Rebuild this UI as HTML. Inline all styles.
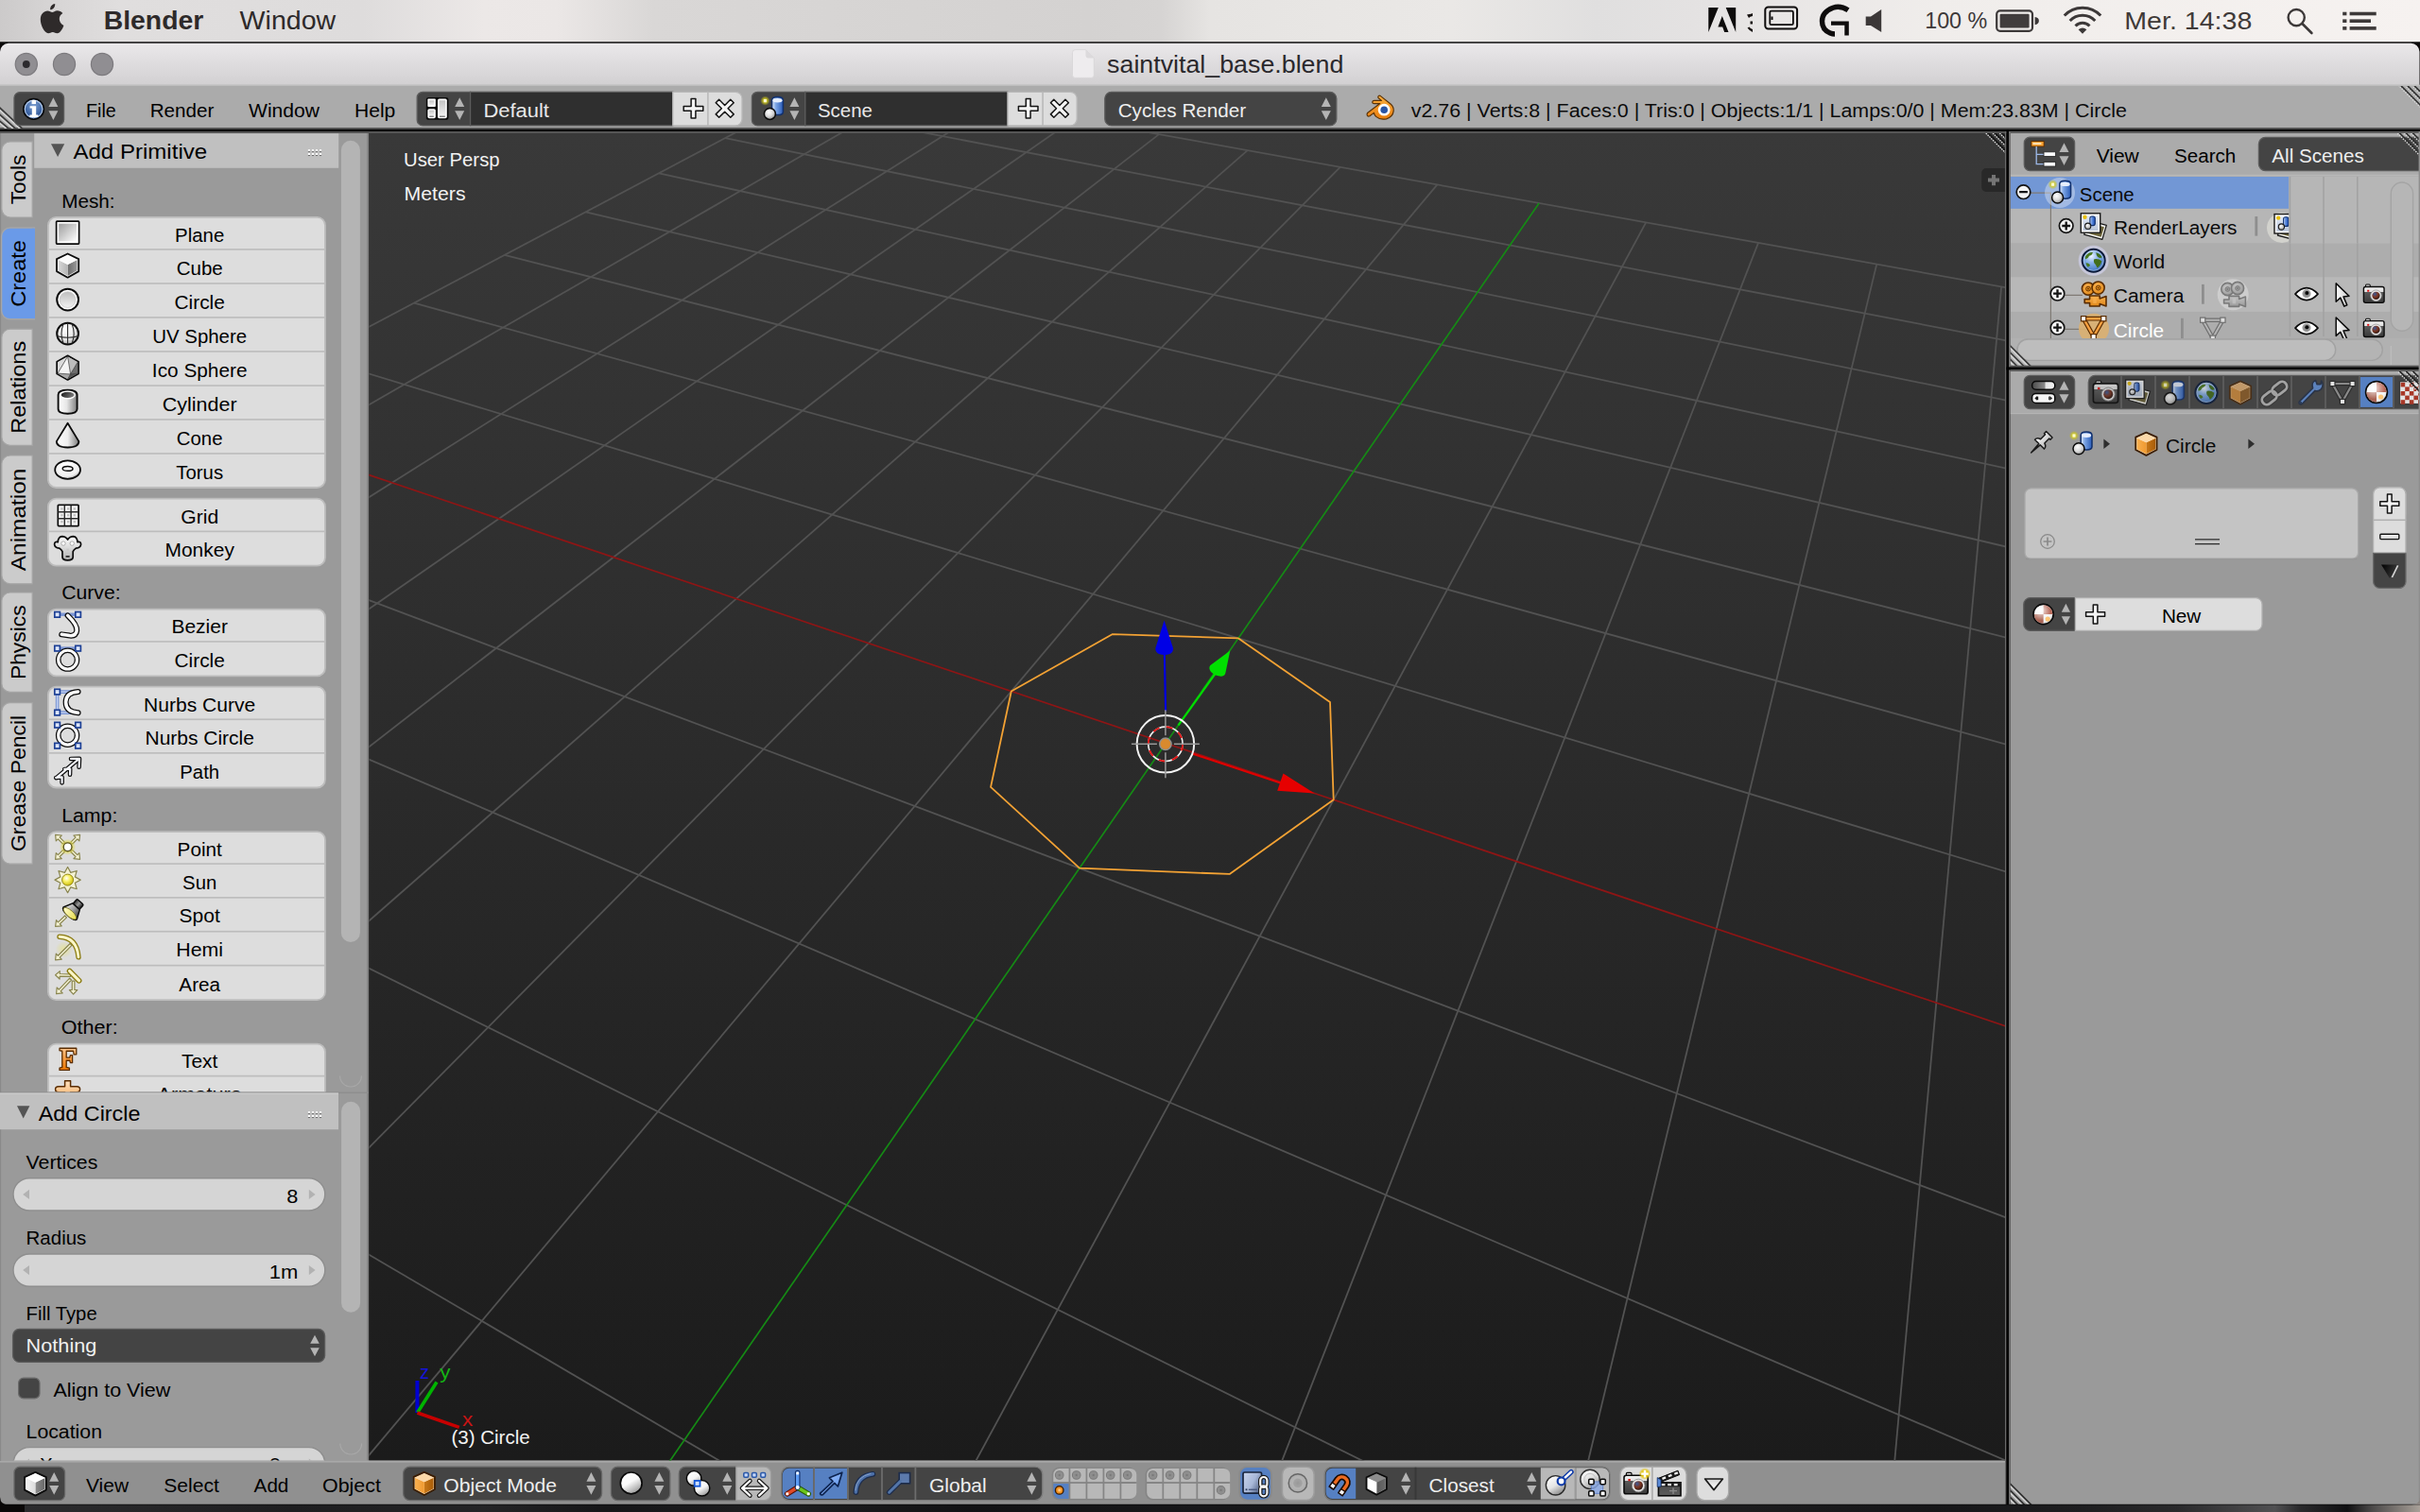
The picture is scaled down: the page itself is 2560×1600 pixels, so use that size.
<!DOCTYPE html>
<html><head><meta charset="utf-8"><title>Blender</title>
<style>html,body{margin:0;padding:0;background:#0b0909;overflow:hidden}svg{display:block}text{font-family:"Liberation Sans",sans-serif;white-space:pre}</style></head>
<body>
<svg width="2560" height="1600" viewBox="0 0 2560 1600">
<defs>
<linearGradient id="g1" x1="0" y1="0" x2="1" y2="0"><stop offset="0" stop-color="#cccaca"/><stop offset="0.02" stop-color="#d6d4d4"/><stop offset="0.05" stop-color="#e0dede"/><stop offset="0.15" stop-color="#dedcdc"/><stop offset="0.2" stop-color="#ece8e7"/><stop offset="0.23" stop-color="#ebe7e6"/><stop offset="0.27" stop-color="#d9d7d6"/><stop offset="0.45" stop-color="#d4d2d1"/><stop offset="0.48" stop-color="#d6d4d3"/><stop offset="0.5" stop-color="#e6e4e2"/><stop offset="0.6" stop-color="#eae8e6"/><stop offset="0.66" stop-color="#e0dfdf"/><stop offset="0.7" stop-color="#e4e2e2"/><stop offset="0.8" stop-color="#f0edeb"/><stop offset="1" stop-color="#f6f2f0"/></linearGradient>
<linearGradient id="g2" x1="0" y1="0" x2="0" y2="1"><stop offset="0" stop-color="#eae8ea"/><stop offset="1" stop-color="#d1cfd1"/></linearGradient>
<linearGradient id="g3" x1="0" y1="0" x2="0" y2="1"><stop offset="0" stop-color="#393939"/><stop offset="1" stop-color="#1b1b1b"/></linearGradient>
<clipPath id="c4"><path d="M390.4 141H2121V1545.6H390.4Z"/></clipPath>
<clipPath id="c5"><path d="M0 91H60V136H0Z"/></clipPath>
<radialGradient id="g6" cx="0.5" cy="0.3" r="0.75"><stop offset="0" stop-color="#7d9fd0"/><stop offset="0.6" stop-color="#3e66a6"/><stop offset="1" stop-color="#1e3f7e"/></radialGradient>
<linearGradient id="g7" x1="0" y1="0" x2="0" y2="1"><stop offset="0" stop-color="#c4c4c4"/><stop offset="1" stop-color="#f0f0f0"/></linearGradient>
<radialGradient id="g8" cx="0.5" cy="0.5" r="0.5"><stop offset="0" stop-color="#f4f060" stop-opacity="0.95"/><stop offset="0.45" stop-color="#d8d020" stop-opacity="0.8"/><stop offset="1" stop-color="#c8c000" stop-opacity="0"/></radialGradient>
<linearGradient id="g9" x1="0" y1="0" x2="1" y2="0"><stop offset="0" stop-color="#e8f0fc"/><stop offset="0.35" stop-color="#7ba4e4"/><stop offset="1" stop-color="#2a5cb8"/></linearGradient>
<radialGradient id="g10" cx="0.4" cy="0.35" r="0.7"><stop offset="0" stop-color="#ffffff"/><stop offset="0.55" stop-color="#d8d8d8"/><stop offset="1" stop-color="#8c8c8c"/></radialGradient>
<linearGradient id="g11" x1="0" y1="0" x2="0" y2="1"><stop offset="0" stop-color="#fbb040"/><stop offset="1" stop-color="#e87d0d"/></linearGradient>
<clipPath id="c12"><path d="M2500 91H2560V136H2500Z"/></clipPath>
<linearGradient id="g13" x1="0" y1="0" x2="1" y2="1"><stop offset="0" stop-color="#9e9e9e"/><stop offset="1" stop-color="#ffffff"/></linearGradient>
<linearGradient id="g14" x1="0" y1="0" x2="1" y2="0"><stop offset="0" stop-color="#6a6a6a"/><stop offset="1" stop-color="#9a9a9a"/></linearGradient>
<linearGradient id="g15" x1="0" y1="0" x2="1" y2="0"><stop offset="0" stop-color="#d8d8d8"/><stop offset="1" stop-color="#b4b4b4"/></linearGradient>
<linearGradient id="g16" x1="0" y1="0" x2="0" y2="1"><stop offset="0" stop-color="#bdbdbd"/><stop offset="1" stop-color="#f2f2f2"/></linearGradient>
<radialGradient id="g17" cx="0.4" cy="0.3" r="0.8"><stop offset="0" stop-color="#ffffff"/><stop offset="0.6" stop-color="#e4e4e4"/><stop offset="1" stop-color="#9c9c9c"/></radialGradient>
<linearGradient id="g18" x1="0" y1="0" x2="1" y2="0"><stop offset="0" stop-color="#ffffff"/><stop offset="0.45" stop-color="#e6e6e6"/><stop offset="1" stop-color="#7e7e7e"/></linearGradient>
<linearGradient id="g19" x1="0" y1="0" x2="1" y2="0.3"><stop offset="0" stop-color="#111"/><stop offset="1" stop-color="#7a7a7a"/></linearGradient>
<linearGradient id="g20" x1="0" y1="0" x2="1" y2="0"><stop offset="0" stop-color="#ffffff"/><stop offset="0.5" stop-color="#eeeeee"/><stop offset="1" stop-color="#7a7a7a"/></linearGradient>
<radialGradient id="g21" cx="0.4" cy="0.3" r="0.8"><stop offset="0" stop-color="#ffffff"/><stop offset="0.7" stop-color="#f0f0f0"/><stop offset="1" stop-color="#8a8a8a"/></radialGradient>
<linearGradient id="g22" x1="0" y1="0" x2="0" y2="1"><stop offset="0" stop-color="#ffffff"/><stop offset="1" stop-color="#b0b0b0"/></linearGradient>
<radialGradient id="g23" cx="0.5" cy="0.5" r="0.5"><stop offset="0" stop-color="#f0e860" stop-opacity="0.95"/><stop offset="0.6" stop-color="#e4dc50" stop-opacity="0.7"/><stop offset="1" stop-color="#e0d840" stop-opacity="0"/></radialGradient>
<radialGradient id="g24" cx="0.4" cy="0.35" r="0.7"><stop offset="0" stop-color="#ffffff"/><stop offset="0.4" stop-color="#fbf36a"/><stop offset="1" stop-color="#c8b800"/></radialGradient>
<linearGradient id="g25" x1="0" y1="0" x2="1" y2="0"><stop offset="0" stop-color="#2a2a2a"/><stop offset="0.5" stop-color="#9a9a9a"/><stop offset="1" stop-color="#1a1a1a"/></linearGradient>
<linearGradient id="g26" x1="0" y1="0" x2="1" y2="0"><stop offset="0" stop-color="#e8e8e8"/><stop offset="0.5" stop-color="#a0a0a0"/><stop offset="1" stop-color="#3a3a3a"/></linearGradient>
<linearGradient id="g27" x1="0" y1="0" x2="1" y2="0"><stop offset="0" stop-color="#fffbd0"/><stop offset="1" stop-color="#e6dc4a"/></linearGradient>
<radialGradient id="g28" cx="0.5" cy="0.5" r="0.5"><stop offset="0" stop-color="#f0e860" stop-opacity="0.5"/><stop offset="1" stop-color="#e0d840" stop-opacity="0"/></radialGradient>
<clipPath id="c29"><path d="M0 0H400V1155.6H0Z"/></clipPath>
<linearGradient id="g30" x1="0" y1="0" x2="0" y2="1"><stop offset="0" stop-color="#ffc890"/><stop offset="0.5" stop-color="#f79a3e"/><stop offset="1" stop-color="#f07800"/></linearGradient>
<linearGradient id="g31" x1="0" y1="0" x2="0" y2="1"><stop offset="0" stop-color="#ffe2c0"/><stop offset="1" stop-color="#f4a04a"/></linearGradient>
<clipPath id="c32"><path d="M0 0H400V1545.6H0Z"/></clipPath>
<linearGradient id="g33" x1="0" y1="0" x2="1" y2="0"><stop offset="0" stop-color="#8a8a8a"/><stop offset="1" stop-color="#6a6a6a"/></linearGradient>
<linearGradient id="g34" x1="0" y1="0" x2="1" y2="0"><stop offset="0" stop-color="#f4f4f4"/><stop offset="1" stop-color="#dcdcdc"/></linearGradient>
<linearGradient id="g35" x1="0" y1="0" x2="1" y2="0"><stop offset="0" stop-color="#c87818"/><stop offset="1" stop-color="#a85c08"/></linearGradient>
<linearGradient id="g36" x1="0" y1="0" x2="1" y2="0"><stop offset="0" stop-color="#f8b050"/><stop offset="1" stop-color="#f09a30"/></linearGradient>
<linearGradient id="g37" x1="0.2" y1="0" x2="0.8" y2="1"><stop offset="0" stop-color="#ffffff"/><stop offset="0.45" stop-color="#fafafa"/><stop offset="1" stop-color="#8c8c8c"/></linearGradient>
<linearGradient id="g38" x1="0.2" y1="0" x2="0.8" y2="1"><stop offset="0" stop-color="#ffffff"/><stop offset="0.5" stop-color="#f4f4f4"/><stop offset="1" stop-color="#8c8c8c"/></linearGradient>
<linearGradient id="g39" x1="0" y1="0" x2="1" y2="1"><stop offset="0" stop-color="#b4d0fc"/><stop offset="1" stop-color="#4a86e8"/></linearGradient>
<radialGradient id="g40" cx="0.5" cy="0.5" r="0.5"><stop offset="0" stop-color="#6e6e6e"/><stop offset="0.35" stop-color="#8c8c8c"/><stop offset="1" stop-color="#929292"/></radialGradient>
<radialGradient id="g41" cx="0.5" cy="0.5" r="0.5"><stop offset="0" stop-color="#6e6e6e"/><stop offset="0.35" stop-color="#8c8c8c"/><stop offset="1" stop-color="#929292"/></radialGradient>
<radialGradient id="g42" cx="0.5" cy="0.5" r="0.5"><stop offset="0" stop-color="#6e6e6e"/><stop offset="0.35" stop-color="#8c8c8c"/><stop offset="1" stop-color="#929292"/></radialGradient>
<radialGradient id="g43" cx="0.5" cy="0.5" r="0.5"><stop offset="0" stop-color="#6e6e6e"/><stop offset="0.35" stop-color="#8c8c8c"/><stop offset="1" stop-color="#929292"/></radialGradient>
<radialGradient id="g44" cx="0.5" cy="0.5" r="0.5"><stop offset="0" stop-color="#6e6e6e"/><stop offset="0.35" stop-color="#8c8c8c"/><stop offset="1" stop-color="#929292"/></radialGradient>
<radialGradient id="g45" cx="0.5" cy="0.5" r="0.5"><stop offset="0" stop-color="#ffe0b0"/><stop offset="0.5" stop-color="#f89a28"/><stop offset="1" stop-color="#e07808"/></radialGradient>
<radialGradient id="g46" cx="0.5" cy="0.5" r="0.5"><stop offset="0" stop-color="#6e6e6e"/><stop offset="0.35" stop-color="#8c8c8c"/><stop offset="1" stop-color="#929292"/></radialGradient>
<radialGradient id="g47" cx="0.5" cy="0.5" r="0.5"><stop offset="0" stop-color="#6e6e6e"/><stop offset="0.35" stop-color="#8c8c8c"/><stop offset="1" stop-color="#929292"/></radialGradient>
<radialGradient id="g48" cx="0.5" cy="0.5" r="0.5"><stop offset="0" stop-color="#6e6e6e"/><stop offset="0.35" stop-color="#8c8c8c"/><stop offset="1" stop-color="#929292"/></radialGradient>
<radialGradient id="g49" cx="0.5" cy="0.5" r="0.5"><stop offset="0" stop-color="#6e6e6e"/><stop offset="0.35" stop-color="#8c8c8c"/><stop offset="1" stop-color="#929292"/></radialGradient>
<linearGradient id="g50" x1="0" y1="0" x2="1" y2="0.6"><stop offset="0" stop-color="#c8d4ec"/><stop offset="0.6" stop-color="#a8b8d8"/><stop offset="1" stop-color="#5c6c90"/></linearGradient>
<radialGradient id="g51" cx="0.5" cy="0.5" r="0.5"><stop offset="0" stop-color="#8e8e8e"/><stop offset="0.3" stop-color="#a8a8a8"/><stop offset="0.6" stop-color="#b4b4b4"/><stop offset="1" stop-color="#aaaaaa"/></radialGradient>
<linearGradient id="g52" x1="0" y1="0" x2="1" y2="0"><stop offset="0" stop-color="#5a5a5a"/><stop offset="1" stop-color="#6a6a6a"/></linearGradient>
<linearGradient id="g53" x1="0" y1="0" x2="1" y2="0"><stop offset="0" stop-color="#f4f4f4"/><stop offset="1" stop-color="#ffffff"/></linearGradient>
<linearGradient id="g54" x1="0.2" y1="0" x2="0.8" y2="1"><stop offset="0" stop-color="#ffffff"/><stop offset="0.5" stop-color="#e4e4e4"/><stop offset="1" stop-color="#7c7c7c"/></linearGradient>
<linearGradient id="g55" x1="0.2" y1="0" x2="0.8" y2="1"><stop offset="0" stop-color="#ffffff"/><stop offset="0.5" stop-color="#dcdcdc"/><stop offset="1" stop-color="#8c8c8c"/></linearGradient>
<linearGradient id="g56" x1="0" y1="0" x2="0" y2="1"><stop offset="0" stop-color="#f4f4f4"/><stop offset="0.3" stop-color="#e0e0e0"/><stop offset="0.31" stop-color="#5a5a5a"/><stop offset="1" stop-color="#3a3a3a"/></linearGradient>
<radialGradient id="g57" cx="0.35" cy="0.3" r="0.8"><stop offset="0" stop-color="#3a5a98"/><stop offset="0.5" stop-color="#7a3420"/><stop offset="1" stop-color="#1a1010"/></radialGradient>
<radialGradient id="g58" cx="0.5" cy="0.5" r="0.5"><stop offset="0" stop-color="#f8e020" stop-opacity="1"/><stop offset="0.6" stop-color="#e8c810" stop-opacity="0.9"/><stop offset="1" stop-color="#e0c000" stop-opacity="0"/></radialGradient>
<linearGradient id="g59" x1="0" y1="0" x2="0" y2="1"><stop offset="0" stop-color="#4a4a4a"/><stop offset="1" stop-color="#5c5c5c"/></linearGradient>
<linearGradient id="g60" x1="0" y1="0" x2="0" y2="1"><stop offset="0" stop-color="#d4d4d4"/><stop offset="1" stop-color="#ffffff"/></linearGradient>
<clipPath id="c61"><path d="M2126.8 186.800H2560V358H2126.8Z"/></clipPath>
<radialGradient id="g62" cx="0.5" cy="0.5" r="0.5"><stop offset="0" stop-color="#f4f060" stop-opacity="0.95"/><stop offset="0.45" stop-color="#d8d020" stop-opacity="0.8"/><stop offset="1" stop-color="#c8c000" stop-opacity="0"/></radialGradient>
<linearGradient id="g63" x1="0" y1="0" x2="1" y2="0"><stop offset="0" stop-color="#e8f0fc"/><stop offset="0.35" stop-color="#7ba4e4"/><stop offset="1" stop-color="#2a5cb8"/></linearGradient>
<radialGradient id="g64" cx="0.4" cy="0.35" r="0.7"><stop offset="0" stop-color="#ffffff"/><stop offset="0.55" stop-color="#d8d8d8"/><stop offset="1" stop-color="#8c8c8c"/></radialGradient>
<linearGradient id="g65" x1="0" y1="0" x2="0" y2="1"><stop offset="0" stop-color="#e4ecf8"/><stop offset="1" stop-color="#b8c4d8"/></linearGradient>
<linearGradient id="g66" x1="0" y1="0" x2="1" y2="0"><stop offset="0" stop-color="#dce8fc"/><stop offset="0.4" stop-color="#5c8ce0"/><stop offset="1" stop-color="#1c4cb0"/></linearGradient>
<radialGradient id="g67" cx="0.4" cy="0.35" r="0.7"><stop offset="0" stop-color="#ffffff"/><stop offset="1" stop-color="#a0a0a0"/></radialGradient>
<linearGradient id="g68" x1="0" y1="0" x2="0" y2="1"><stop offset="0" stop-color="#e4ecf8"/><stop offset="1" stop-color="#b8c4d8"/></linearGradient>
<linearGradient id="g69" x1="0" y1="0" x2="1" y2="0"><stop offset="0" stop-color="#dce8fc"/><stop offset="0.4" stop-color="#5c8ce0"/><stop offset="1" stop-color="#1c4cb0"/></linearGradient>
<radialGradient id="g70" cx="0.4" cy="0.35" r="0.7"><stop offset="0" stop-color="#ffffff"/><stop offset="1" stop-color="#a0a0a0"/></radialGradient>
<radialGradient id="g71" cx="0.4" cy="0.3" r="0.8"><stop offset="0" stop-color="#f0f8ff"/><stop offset="0.35" stop-color="#8cb4e8"/><stop offset="1" stop-color="#2c64b4"/></radialGradient>
<radialGradient id="g72" cx="0.4" cy="0.35" r="0.7"><stop offset="0" stop-color="#f8b050"/><stop offset="1" stop-color="#e08818"/></radialGradient>
<radialGradient id="g73" cx="0.4" cy="0.35" r="0.7"><stop offset="0" stop-color="#f8b050"/><stop offset="1" stop-color="#e08818"/></radialGradient>
<linearGradient id="g74" x1="0" y1="0" x2="0" y2="1"><stop offset="0" stop-color="#f8b050"/><stop offset="1" stop-color="#e08818"/></linearGradient>
<radialGradient id="g75" cx="0.4" cy="0.35" r="0.7"><stop offset="0" stop-color="#c4c4c4"/><stop offset="1" stop-color="#9a9a9a"/></radialGradient>
<radialGradient id="g76" cx="0.4" cy="0.35" r="0.7"><stop offset="0" stop-color="#c4c4c4"/><stop offset="1" stop-color="#9a9a9a"/></radialGradient>
<linearGradient id="g77" x1="0" y1="0" x2="0" y2="1"><stop offset="0" stop-color="#c4c4c4"/><stop offset="1" stop-color="#9a9a9a"/></linearGradient>
<radialGradient id="g78" cx="0.5" cy="0.5" r="0.5"><stop offset="0" stop-color="#6a6a6a"/><stop offset="1" stop-color="#a8a8a8"/></radialGradient>
<linearGradient id="g79" x1="0" y1="0" x2="1" y2="0"><stop offset="0" stop-color="#ffffff"/><stop offset="1" stop-color="#c8c8c8"/></linearGradient>
<linearGradient id="g80" x1="0" y1="0" x2="0" y2="1"><stop offset="0" stop-color="#f4f4f4"/><stop offset="0.3" stop-color="#e0e0e0"/><stop offset="0.31" stop-color="#5a5a5a"/><stop offset="1" stop-color="#3a3a3a"/></linearGradient>
<radialGradient id="g81" cx="0.35" cy="0.3" r="0.8"><stop offset="0" stop-color="#3a5a98"/><stop offset="0.5" stop-color="#7a3420"/><stop offset="1" stop-color="#1a1010"/></radialGradient>
<radialGradient id="g82" cx="0.5" cy="0.5" r="0.5"><stop offset="0" stop-color="#6a6a6a"/><stop offset="1" stop-color="#a8a8a8"/></radialGradient>
<linearGradient id="g83" x1="0" y1="0" x2="1" y2="0"><stop offset="0" stop-color="#ffffff"/><stop offset="1" stop-color="#c8c8c8"/></linearGradient>
<linearGradient id="g84" x1="0" y1="0" x2="0" y2="1"><stop offset="0" stop-color="#f4f4f4"/><stop offset="0.3" stop-color="#e0e0e0"/><stop offset="0.31" stop-color="#5a5a5a"/><stop offset="1" stop-color="#3a3a3a"/></linearGradient>
<radialGradient id="g85" cx="0.35" cy="0.3" r="0.8"><stop offset="0" stop-color="#3a5a98"/><stop offset="0.5" stop-color="#7a3420"/><stop offset="1" stop-color="#1a1010"/></radialGradient>
<clipPath id="c86"><path d="M2500 141H2560V186H2500Z"/></clipPath>
<clipPath id="c87"><path d="M2126.8 360H2160V387H2126.8Z"/></clipPath>
<linearGradient id="g88" x1="0" y1="0" x2="1" y2="0"><stop offset="0" stop-color="#4a4a4a"/><stop offset="0.55" stop-color="#8a8a8a"/><stop offset="0.6" stop-color="#e4e4e4"/><stop offset="1" stop-color="#f4f4f4"/></linearGradient>
<clipPath id="c89"><path d="M2200 393H2560V437H2200Z"/></clipPath>
<linearGradient id="g90" x1="0" y1="0" x2="0" y2="1"><stop offset="0" stop-color="#f4f4f4"/><stop offset="0.3" stop-color="#e0e0e0"/><stop offset="0.31" stop-color="#5a5a5a"/><stop offset="1" stop-color="#3a3a3a"/></linearGradient>
<radialGradient id="g91" cx="0.35" cy="0.3" r="0.8"><stop offset="0" stop-color="#3a5a98"/><stop offset="0.5" stop-color="#7a3420"/><stop offset="1" stop-color="#1a1010"/></radialGradient>
<linearGradient id="g92" x1="0" y1="0" x2="0" y2="1"><stop offset="0" stop-color="#e4ecf8"/><stop offset="1" stop-color="#b8c4d8"/></linearGradient>
<linearGradient id="g93" x1="0" y1="0" x2="1" y2="0"><stop offset="0" stop-color="#dce8fc"/><stop offset="0.4" stop-color="#5c8ce0"/><stop offset="1" stop-color="#1c4cb0"/></linearGradient>
<radialGradient id="g94" cx="0.4" cy="0.35" r="0.7"><stop offset="0" stop-color="#ffffff"/><stop offset="1" stop-color="#a0a0a0"/></radialGradient>
<radialGradient id="g95" cx="0.5" cy="0.5" r="0.5"><stop offset="0" stop-color="#f4f060" stop-opacity="0.95"/><stop offset="0.45" stop-color="#d8d020" stop-opacity="0.8"/><stop offset="1" stop-color="#c8c000" stop-opacity="0"/></radialGradient>
<linearGradient id="g96" x1="0" y1="0" x2="1" y2="0"><stop offset="0" stop-color="#e8f0fc"/><stop offset="0.35" stop-color="#7ba4e4"/><stop offset="1" stop-color="#2a5cb8"/></linearGradient>
<radialGradient id="g97" cx="0.4" cy="0.35" r="0.7"><stop offset="0" stop-color="#ffffff"/><stop offset="0.55" stop-color="#d8d8d8"/><stop offset="1" stop-color="#8c8c8c"/></radialGradient>
<radialGradient id="g98" cx="0.4" cy="0.3" r="0.8"><stop offset="0" stop-color="#f0f8ff"/><stop offset="0.35" stop-color="#8cb4e8"/><stop offset="1" stop-color="#2c64b4"/></radialGradient>
<radialGradient id="g99" cx="0.35" cy="0.3" r="0.8"><stop offset="0" stop-color="#ffffff" stop-opacity="0.95"/><stop offset="0.3" stop-color="#ffffff" stop-opacity="0.5"/><stop offset="0.7" stop-color="#ffffff" stop-opacity="0"/><stop offset="1" stop-color="#000000" stop-opacity="0.25"/></radialGradient>
<clipPath id="c100"><path d="M2500 393H2560V440H2500Z"/></clipPath>
<linearGradient id="g101" x1="0" y1="0" x2="1" y2="0"><stop offset="0" stop-color="#ffffff"/><stop offset="1" stop-color="#b4b4b4"/></linearGradient>
<radialGradient id="g102" cx="0.5" cy="0.5" r="0.5"><stop offset="0" stop-color="#f4f060" stop-opacity="0.95"/><stop offset="0.45" stop-color="#d8d020" stop-opacity="0.8"/><stop offset="1" stop-color="#c8c000" stop-opacity="0"/></radialGradient>
<linearGradient id="g103" x1="0" y1="0" x2="1" y2="0"><stop offset="0" stop-color="#e8f0fc"/><stop offset="0.35" stop-color="#7ba4e4"/><stop offset="1" stop-color="#2a5cb8"/></linearGradient>
<radialGradient id="g104" cx="0.4" cy="0.35" r="0.7"><stop offset="0" stop-color="#ffffff"/><stop offset="0.55" stop-color="#d8d8d8"/><stop offset="1" stop-color="#8c8c8c"/></radialGradient>
<linearGradient id="g105" x1="0" y1="0" x2="1" y2="0"><stop offset="0" stop-color="#c87818"/><stop offset="1" stop-color="#a85c08"/></linearGradient>
<linearGradient id="g106" x1="0" y1="0" x2="1" y2="0"><stop offset="0" stop-color="#f8b050"/><stop offset="1" stop-color="#f09a30"/></linearGradient>
<linearGradient id="g107" x1="0" y1="0" x2="0" y2="1"><stop offset="0" stop-color="#ffffff"/><stop offset="1" stop-color="#c8c8c8"/></linearGradient>
<linearGradient id="g108" x1="0" y1="0" x2="1" y2="0.3"><stop offset="0" stop-color="#000000"/><stop offset="1" stop-color="#3a3a3a"/></linearGradient>
<radialGradient id="g109" cx="0.35" cy="0.3" r="0.8"><stop offset="0" stop-color="#ffffff" stop-opacity="0.95"/><stop offset="0.3" stop-color="#ffffff" stop-opacity="0.5"/><stop offset="0.7" stop-color="#ffffff" stop-opacity="0"/><stop offset="1" stop-color="#000000" stop-opacity="0.25"/></radialGradient>
<clipPath id="c110"><path d="M2126.8 1560H2160V1592H2126.8Z"/></clipPath>
<clipPath id="c111"><path d="M2080 141H2121V180H2080Z"/></clipPath>
<linearGradient id="g112" x1="0" y1="0" x2="1" y2="0"><stop offset="0" stop-color="#0a0808"/><stop offset="0.01" stop-color="#0a0808"/><stop offset="0.01" stop-color="#2c2c2e"/><stop offset="0.06" stop-color="#262628"/><stop offset="0.12" stop-color="#1e1e20"/><stop offset="0.2" stop-color="#242426"/><stop offset="0.25" stop-color="#161618"/><stop offset="0.32" stop-color="#1e1e20"/><stop offset="0.4" stop-color="#121214"/><stop offset="0.5" stop-color="#18181a"/><stop offset="0.62" stop-color="#141416"/><stop offset="0.72" stop-color="#1c1c1e"/><stop offset="0.8" stop-color="#161618"/><stop offset="0.86" stop-color="#1e1e20"/><stop offset="0.9" stop-color="#2a2a2c"/><stop offset="0.94" stop-color="#505052"/><stop offset="0.95" stop-color="#2a2a2c"/><stop offset="0.97" stop-color="#101012"/><stop offset="0.98" stop-color="#4a4848"/><stop offset="1" stop-color="#a8a098"/></linearGradient>
</defs>
<rect x="0" y="0" width="2560" height="1600" fill="#0b0909" />
<rect x="0" y="0" width="2560" height="44.5" fill="url(#g1)" />
<rect x="0" y="44.5" width="2560" height="2" fill="#0c0c0c" />
<path d="M9 45.8H2550.5A9 9 0 0 1 2559.5 54.8V91.8H0V54.8A9 9 0 0 1 9 45.8Z" fill="url(#g2)" />
<rect x="0" y="89.8" width="2560" height="46" fill="#ababab" />
<rect x="0" y="89.8" width="2560" height="1.2" fill="#bdbdbd" />
<rect x="0" y="135" width="2560" height="2" fill="#5a5a5a" />
<rect x="0" y="136.8" width="2560" height="2.4" fill="#000" />
<rect x="0" y="139" width="2560" height="2" fill="#555" />
<rect x="0" y="141" width="390" height="1405" fill="#9a9a9a" />
<rect x="388.3" y="141" width="2.2" height="1405" fill="#808080" />
<rect x="390.4" y="141" width="1730.6" height="1404.6" fill="url(#g3)" />
<rect x="2121" y="139" width="1.6" height="1453" fill="#6a6a6a" />
<rect x="2122.5" y="139" width="2.6" height="1453" fill="#000" />
<rect x="2125" y="139" width="1.8" height="1453" fill="#6e6e6e" />
<rect x="2126.8" y="139" width="434" height="1453" fill="#9a9a9a" />
<rect x="0" y="1545.6" width="2121" height="46.4" fill="#909090" />
<rect x="0" y="1545.6" width="2121" height="2" fill="#a8a8a8" />
<g clip-path="url(#c4)">
<line x1="-1936.85" y1="1579.4" x2="889.6" y2="81.2" stroke="#525252" stroke-width="1.8" />
<line x1="-1936.85" y1="1579.4" x2="-34044.21" y2="-71623.23" stroke="#525252" stroke-width="1.8" />
<line x1="-1870.9" y1="1729.75" x2="968.45" y2="95.48" stroke="#525252" stroke-width="1.8" />
<line x1="-1445.51" y1="1318.96" x2="12913.63" y2="20375.29" stroke="#525252" stroke-width="1.8" />
<line x1="-1795.21" y1="1902.33" x2="1050.65" y2="110.36" stroke="#525252" stroke-width="1.8" />
<line x1="-1058.49" y1="1113.82" x2="6867.34" y2="8529.55" stroke="#525252" stroke-width="1.8" />
<line x1="-1707.42" y1="2102.48" x2="1136.43" y2="125.9" stroke="#525252" stroke-width="1.8" />
<line x1="-745.75" y1="948.04" x2="5183.68" y2="5230.97" stroke="#525252" stroke-width="1.8" />
<line x1="-1604.4" y1="2337.36" x2="1226.02" y2="142.12" stroke="#525252" stroke-width="1.8" />
<line x1="-487.78" y1="811.3" x2="4392.76" y2="3681.43" stroke="#525252" stroke-width="1.8" />
<line x1="-1481.79" y1="2616.89" x2="1319.69" y2="159.08" stroke="#525252" stroke-width="1.8" />
<line x1="-271.34" y1="696.57" x2="3933.34" y2="2781.35" stroke="#525252" stroke-width="1.8" />
<line x1="-1333.44" y1="2955.13" x2="1417.71" y2="176.83" stroke="#525252" stroke-width="1.8" />
<line x1="-87.16" y1="598.95" x2="3633.11" y2="2193.15" stroke="#525252" stroke-width="1.8" />
<line x1="-1150.27" y1="3372.74" x2="1520.4" y2="195.43" stroke="#525252" stroke-width="1.8" />
<line x1="71.47" y1="514.86" x2="3421.56" y2="1778.67" stroke="#525252" stroke-width="1.8" />
<line x1="-615.45" y1="4592.1" x2="1741.19" y2="235.41" stroke="#525252" stroke-width="1.8" />
<line x1="330.78" y1="377.41" x2="3143.15" y2="1233.21" stroke="#525252" stroke-width="1.8" />
<line x1="-202.78" y1="5532.96" x2="1860.08" y2="256.94" stroke="#525252" stroke-width="1.8" />
<line x1="438.11" y1="320.52" x2="3046.68" y2="1044.22" stroke="#525252" stroke-width="1.8" />
<line x1="392.38" y1="6889.88" x2="1985.23" y2="279.6" stroke="#525252" stroke-width="1.8" />
<line x1="533.78" y1="269.81" x2="2968.12" y2="890.31" stroke="#525252" stroke-width="1.8" />
<line x1="1325.43" y1="9017.17" x2="2117.14" y2="303.49" stroke="#525252" stroke-width="1.8" />
<line x1="619.6" y1="224.32" x2="2902.91" y2="762.55" stroke="#525252" stroke-width="1.8" />
<line x1="2998.19" y1="12830.95" x2="2256.38" y2="328.71" stroke="#525252" stroke-width="1.8" />
<line x1="697.02" y1="183.28" x2="2847.91" y2="654.8" stroke="#525252" stroke-width="1.8" />
<line x1="6867.95" y1="21653.75" x2="2403.59" y2="355.36" stroke="#525252" stroke-width="1.8" />
<line x1="767.2" y1="146.08" x2="2800.9" y2="562.69" stroke="#525252" stroke-width="1.8" />
<line x1="25542.88" y1="64231.33" x2="2559.45" y2="383.59" stroke="#525252" stroke-width="1.8" />
<line x1="831.13" y1="112.19" x2="2760.25" y2="483.06" stroke="#525252" stroke-width="1.8" />
<line x1="-34044.21" y1="-71623.23" x2="2724.76" y2="413.52" stroke="#525252" stroke-width="1.8" />
<line x1="889.6" y1="81.2" x2="2724.76" y2="413.52" stroke="#525252" stroke-width="1.8" />
<line x1="209.53" y1="441.68" x2="3264.44" y2="1470.85" stroke="#8e1515" stroke-width="1.7" />
<line x1="-918.41" y1="3901.37" x2="1628.1" y2="214.93" stroke="#158a15" stroke-width="1.7" />
<path d="M1410.72 846.35L1407.01 743.09L1310.03 675.39L1176.97 671.05L1069.81 731.5L1048.04 832.87L1141.96 918.7L1300.66 924.95Z" fill="none" stroke="#f3a234" stroke-width="1.8" stroke-linejoin="round"/>
<line x1="1233.1" y1="752.6" x2="1231.8" y2="690" stroke="#0000e0" stroke-width="2.2" />
<path d="M1231.6 656.5 L1222.3 686 Q1222 690 1226 692 Q1231.8 694.2 1237.5 692 Q1241.3 690 1241 686 Z" fill="#0000e6" />
<line x1="1246.5" y1="767.5" x2="1289" y2="708" stroke="#00dc00" stroke-width="2.2" />
<path d="M1301.3 688.6 L1280.4 704 Q1278 707 1281 711 Q1286 716 1293 715.6 Q1296 715 1296.5 711.5 Z" fill="#00e000" />
<line x1="1262" y1="797.8" x2="1356" y2="829" stroke="#e00000" stroke-width="2.2" />
<path d="M1390.5 839.6 L1357.5 818.5 L1351.2 836.8 Z" fill="#e60000" />
<circle cx="1232.9" cy="787.3" r="30.3" fill="none" stroke="#f2f2f2" stroke-width="2" />
<circle cx="1232.9" cy="787.3" r="18.2" fill="none" stroke="#f0f0f0" stroke-width="1.6" />
<circle cx="1232.9" cy="787.3" r="18.2" fill="none" stroke="#e61010" stroke-width="1.8" stroke-dasharray="7.15 7.15"/>
<line x1="1241.9" y1="787.3" x2="1268.9" y2="787.3" stroke="#9a9a9a" stroke-width="1.5" />
<line x1="1223.9" y1="787.3" x2="1196.9" y2="787.3" stroke="#9a9a9a" stroke-width="1.5" />
<line x1="1232.9" y1="796.3" x2="1232.9" y2="823.3" stroke="#9a9a9a" stroke-width="1.5" />
<line x1="1232.9" y1="778.3" x2="1232.9" y2="751.3" stroke="#9a9a9a" stroke-width="1.5" />
<circle cx="1232.9" cy="787.3" r="6.2" fill="#d98a2e" stroke="#8f8f8f" stroke-width="1.5" />
<line x1="441.4" y1="1495" x2="441.4" y2="1461" stroke="#0000d0" stroke-width="4" />
<line x1="441.8" y1="1494.5" x2="462" y2="1462.5" stroke="#00b400" stroke-width="3.6" />
<line x1="441.5" y1="1495" x2="485.8" y2="1510.4" stroke="#c80000" stroke-width="3.6" />
<text x="444" y="1458.8" font-size="20.04" fill="#1414d8" textLength="9.97" lengthAdjust="spacingAndGlyphs" >z</text>
<text x="465.2" y="1459.2" font-size="20.04" fill="#14b414" textLength="11.24" lengthAdjust="spacingAndGlyphs" >y</text>
<text x="489" y="1508.8" font-size="20.04" fill="#c81414" textLength="11.24" lengthAdjust="spacingAndGlyphs" >x</text>
<text x="427" y="176" font-size="20.04" fill="#f2f2f2" textLength="101.58" lengthAdjust="spacingAndGlyphs" >User Persp</text>
<text x="427.6" y="212" font-size="20.04" fill="#f2f2f2" textLength="64.93" lengthAdjust="spacingAndGlyphs" >Meters</text>
<text x="477.4" y="1528" font-size="20.04" fill="#f2f2f2" textLength="83.29" lengthAdjust="spacingAndGlyphs" >(3) Circle</text>
</g>
<path d="M60.6 11.3c-2.4.1-4.1 1.7-5.3 1.7-1.3 0-2.9-1.6-5-1.6-3.9.1-7.5 3.4-7.5 9.2 0 6.3 4.4 14.6 8.3 14.6 1.7 0 2.7-1.3 4.7-1.3 2 0 2.6 1.3 4.7 1.3 3.1 0 5.9-5.1 6.9-8.3-3.3-1.3-4.6-4.6-4.6-6.900 0-2.500 1.3-4.700 3.500-6-1.400-1.900-3.500-2.700-5.700-2.700zM58.200 3.900c-2.700.200-5.400 2.900-5 6.300 2.600.100 5.400-2.600 5-6.300z" fill="#2e2a2a" />
<text x="109.7" y="31.3" font-size="27" fill="#2e2a2a" textLength="105.6" lengthAdjust="spacingAndGlyphs" font-weight="bold" >Blender</text>
<text x="253.6" y="31.3" font-size="27" fill="#2e2a2a" textLength="101.6" lengthAdjust="spacingAndGlyphs" >Window</text>
<path d="M1807.3 33.9 L1807.3 8 L1817.8 8 Z M1836.2 33.9 L1836.2 8 L1825.7 8 Z M1821.8 17 L1828.5 33.9 L1824.2 33.9 L1822.2 28.6 L1817.4 28.6 Z" fill="#0c0a0a" />
<path d="M1848 15.5 Q1853.5 14.500 1854 14 L1854 17 Q1851 17.300 1850 19 Z M1848.5 29.500 Q1851 33 1854 33.900 L1854 31 Q1851.500 30 1850.500 28.500 Z M1851.500 22.500 h2.500 v3 h-2.500z" fill="#15100f" />
<rect x="1867.3" y="7.4" width="33.8" height="23" fill="none" rx="3.2" stroke="#0e0c0c" stroke-width="2" />
<rect x="1872.3" y="11.6" width="24.6" height="14.6" fill="none" rx="1.5" stroke="#0e0c0c" stroke-width="1.8" />
<rect x="1873.5" y="17.5" width="2" height="3.5" fill="#0e0c0c" />
<path d="M1955 10.800 Q1947 5.500 1939 8.200 Q1927.500 12.500 1927.500 22.500 Q1927.500 31.500 1936 35 Q1938.500 36 1941 36" fill="none" stroke="#0e0c0c" stroke-width="5.4" />
<path d="M1937 22.500 H1955.800 V37.500 H1951.300 V26.800 H1937 Z" fill="#0e0c0c" />
<path d="M1973.7 17.6 H1979 L1990.2 10 V34 L1979 27 H1973.7 Z" fill="#3c3838" />
<text x="2036.2" y="30.2" font-size="24.3" fill="#3c3838" textLength="66.1" lengthAdjust="spacingAndGlyphs" >100 %</text>
<rect x="2112.2" y="11.4" width="37.8" height="21.4" fill="none" rx="3.6" stroke="#3c3838" stroke-width="2.2" />
<rect x="2115.6" y="14.8" width="31" height="14.6" fill="#403c3c" rx="1.2" />
<path d="M2152.6 18 Q2156.9 18.500 2156.900 22.100 Q2156.900 25.700 2152.600 26.200 Z" fill="#3c3838" />
<path d="M2183.77 16.56 A26.3 26.3 0 0 1 2222.23 16.56" fill="none" stroke="#3c3838" stroke-width="3" />
<path d="M2189.69 22.09 A18.2 18.2 0 0 1 2216.31 22.09" fill="none" stroke="#3c3838" stroke-width="3" />
<path d="M2195.54 27.54 A10.2 10.2 0 0 1 2210.46 27.54" fill="none" stroke="#3c3838" stroke-width="3" />
<path d="M2203 35.800 L2198.600 31.200 Q2203 27.600 2207.400 31.200 Z" fill="#3c3838" />
<text x="2247.3" y="31.4" font-size="26.6" fill="#3f3a38" textLength="135" lengthAdjust="spacingAndGlyphs" >Mer. 14:38</text>
<circle cx="2429.2" cy="18.6" r="8.6" fill="none" stroke="#3c3838" stroke-width="2.4" />
<line x1="2435.4" y1="25" x2="2445.4" y2="35" stroke="#3c3838" stroke-width="2.6" stroke-linecap="round"/>
<rect x="2478.2" y="12.7" width="4.2" height="3.6" fill="#3c3838" />
<rect x="2485.6" y="12.7" width="28.1" height="3.6" fill="#3c3838" />
<rect x="2478.2" y="20.4" width="4.2" height="3.6" fill="#3c3838" />
<rect x="2485.6" y="20.4" width="22.4" height="3.6" fill="#3c3838" />
<rect x="2478.2" y="28.1" width="4.2" height="3.6" fill="#3c3838" />
<rect x="2485.6" y="28.1" width="28.1" height="3.6" fill="#3c3838" />
<circle cx="27.8" cy="68" r="11.6" fill="#908e92" stroke="#7c7a7e" stroke-width="1.2" />
<circle cx="68" cy="68" r="11.6" fill="#908e92" stroke="#7c7a7e" stroke-width="1.2" />
<circle cx="108" cy="68" r="11.6" fill="#908e92" stroke="#7c7a7e" stroke-width="1.2" />
<circle cx="27.8" cy="68" r="3.9" fill="#2c2a2e" />
<path d="M1134.5 55.600 Q1134.500 52.600 1137.500 52.600 H1148.500 L1157.300 61.400 V79.400 Q1157.300 82.400 1154.300 82.400 H1137.500 Q1134.500 82.400 1134.500 79.400 Z" fill="#eeecee" stroke="#d6d4d6" stroke-width="0.8" />
<path d="M1148.5 52.600 V59 Q1148.500 61.400 1151 61.400 H1157.300 Z" fill="#dcdadc" />
<text x="1171.1" y="77.2" font-size="26.2" fill="#2a282c" textLength="250.2" lengthAdjust="spacingAndGlyphs" >saintvital_base.blend</text>
<g clip-path="url(#c5)">
<line x1="-2" y1="112.4" x2="25.6" y2="138" stroke="#3a3a3a" stroke-width="1.7" />
<line x1="-2" y1="115" x2="23" y2="138" stroke="#d6d6d6" stroke-width="1.5" />
<line x1="-2" y1="119.6" x2="18.4" y2="138" stroke="#3a3a3a" stroke-width="1.7" />
<line x1="-2" y1="122.2" x2="15.8" y2="138" stroke="#d6d6d6" stroke-width="1.5" />
<line x1="-2" y1="126.6" x2="11.4" y2="138" stroke="#3a3a3a" stroke-width="1.7" />
<line x1="-2" y1="129.2" x2="8.8" y2="138" stroke="#d6d6d6" stroke-width="1.5" />
</g>
<path d="M21 97.6H61.6A6 6 0 0 1 67.6 103.6V126.6A6 6 0 0 1 61.6 132.6H21A6 6 0 0 1 15 126.6V103.6A6 6 0 0 1 21 97.6Z" fill="#444444" stroke="#5c5c5c" stroke-width="1.3" />
<circle cx="35.6" cy="115.4" r="10.8" fill="url(#g6)" stroke="#0a0a0a" stroke-width="1.6" />
<circle cx="35.6" cy="115.4" r="9.3" fill="none" stroke="#b9cde8" stroke-width="1.1" />
<path d="M33.600 106 h4.400 v4 h-4.400 z M31.600 112.200 h6.600 v9.400 h2.200 v2.400 h-9 v-2.400 h2.400 v-7 h-2.200 z" fill="#ffffff" />
<path d="M51.4 112.9 L61.4 112.9 L56.4 103.3 Z" fill="#b4b4b4" />
<path d="M51.4 117.3 L61.4 117.3 L56.4 126.9 Z" fill="#b4b4b4" />
<text x="91" y="124" font-size="20.04" fill="#000" textLength="31.79" lengthAdjust="spacingAndGlyphs" >File</text>
<text x="158.7" y="124" font-size="20.04" fill="#000" textLength="67.64" lengthAdjust="spacingAndGlyphs" >Render</text>
<text x="263" y="124" font-size="20.04" fill="#000" textLength="74.91" lengthAdjust="spacingAndGlyphs" >Window</text>
<text x="375" y="124" font-size="20.04" fill="#000" textLength="43.32" lengthAdjust="spacingAndGlyphs" >Help</text>
<path d="M447.2 97.3H497.6V132.9H447.2A6 6 0 0 1 441.2 126.9V103.3A6 6 0 0 1 447.2 97.3Z" fill="#444444" stroke="#5c5c5c" stroke-width="1.3" />
<rect x="497.6" y="97.3" width="214.2" height="35.6" fill="#2f2f2f" stroke="#5c5c5c" stroke-width="1.3" />
<rect x="498.8" y="98.5" width="212" height="33.2" fill="#2f2f2f" />
<path d="M711.8 97.3H749V132.9H711.8V97.3Z" fill="#dddddd" stroke="#b9b9b9" stroke-width="1.3" />
<path d="M749 97.3H778A7 7 0 0 1 785 104.3V125.9A7 7 0 0 1 778 132.9H749V97.3Z" fill="#dddddd" stroke="#b9b9b9" stroke-width="1.3" />
<path d="M-2.4 -10.3H2.4V-2.4H10.3V2.4H2.4V10.3H-2.4V2.4H-10.3V-2.4H-2.4Z" fill="#f4f4f4" stroke="#141414" stroke-width="1.5" stroke-linejoin="round" transform="translate(733.5 114.8) rotate(0)"/>
<path d="M-2.4 -11H2.4V-2.4H11V2.4H2.4V11H-2.4V2.4H-11V-2.4H-2.4Z" fill="#f4f4f4" stroke="#141414" stroke-width="1.5" stroke-linejoin="round" transform="translate(766.7 114.8) rotate(45)"/>
<path d="M481.2 112.9 L491.2 112.9 L486.2 103.3 Z" fill="#b4b4b4" />
<path d="M481.2 117.3 L491.2 117.3 L486.2 126.9 Z" fill="#b4b4b4" />
<rect x="450.8" y="103" width="23.6" height="23.8" fill="#0a0a0a" rx="2.6" />
<rect x="452.4" y="104.6" width="8.4" height="8.4" fill="#fff" rx="0.8" />
<rect x="453.9" y="106.2" width="5.4" height="5.4" fill="url(#g7)" />
<rect x="452.4" y="115.2" width="8.4" height="10" fill="#fff" rx="1.6" />
<rect x="453.9" y="116.7" width="5.4" height="5.4" fill="url(#g7)" />
<rect x="454.2" y="122.6" width="4.6" height="1.2" fill="#666" />
<rect x="463" y="104.6" width="9.8" height="20.6" fill="#fff" rx="1.6" />
<rect x="464.6" y="106.2" width="6.6" height="16" fill="url(#g7)" />
<rect x="465" y="122.6" width="5.8" height="1.2" fill="#666" />
<text x="511.5" y="124" font-size="20.04" fill="#e8e8e8" textLength="69.42" lengthAdjust="spacingAndGlyphs" >Default</text>
<path d="M801.4 97.3H851.8V132.9H801.4A6 6 0 0 1 795.4 126.9V103.3A6 6 0 0 1 801.4 97.3Z" fill="#444444" stroke="#5c5c5c" stroke-width="1.3" />
<rect x="851.8" y="97.3" width="214.2" height="35.6" fill="#2f2f2f" stroke="#5c5c5c" stroke-width="1.3" />
<rect x="853" y="98.5" width="212" height="33.2" fill="#2f2f2f" />
<path d="M1066 97.3H1103.2V132.9H1066V97.3Z" fill="#dddddd" stroke="#b9b9b9" stroke-width="1.3" />
<path d="M1103.2 97.3H1132.2A7 7 0 0 1 1139.2 104.3V125.9A7 7 0 0 1 1132.2 132.9H1103.2V97.3Z" fill="#dddddd" stroke="#b9b9b9" stroke-width="1.3" />
<path d="M-2.4 -10.3H2.4V-2.4H10.3V2.4H2.4V10.3H-2.4V2.4H-10.3V-2.4H-2.4Z" fill="#f4f4f4" stroke="#141414" stroke-width="1.5" stroke-linejoin="round" transform="translate(1087.7 114.8) rotate(0)"/>
<path d="M-2.4 -11H2.4V-2.4H11V2.4H2.4V11H-2.4V2.4H-11V-2.4H-2.4Z" fill="#f4f4f4" stroke="#141414" stroke-width="1.5" stroke-linejoin="round" transform="translate(1120.9 114.8) rotate(45)"/>
<path d="M835.4 112.9 L845.4 112.9 L840.4 103.3 Z" fill="#b4b4b4" />
<path d="M835.4 117.3 L845.4 117.3 L840.4 126.9 Z" fill="#b4b4b4" />
<g transform="translate(804 102) scale(1)">
<circle cx="5.4" cy="4.6" r="5.2" fill="url(#g8)" />
<rect x="3.9" y="3" width="3" height="3.2" fill="#fbfbd0" />
<path d="M12.6 4.2 Q12.6 0.6 18.6 0.6 Q24.4 0.6 24.4 4.2 V16.4 Q24.4 19.6 18.6 19.6 Q12.6 19.6 12.6 16.4 Z" fill="url(#g9)" stroke="#12306c" stroke-width="1.5" />
<ellipse cx="18.5" cy="4.3" rx="5" ry="2.2" fill="#e6eefc" />
<path d="M14 14.5 Q14 18.4 18.6 18.4 L16 18.4 Z" fill="#e05070" opacity="0.5"/>
<circle cx="10.4" cy="18.4" r="6" fill="url(#g10)" stroke="#0a0a0a" stroke-width="1.5" />
</g>
<text x="865" y="124" font-size="20.04" fill="#e8e8e8" textLength="57.93" lengthAdjust="spacingAndGlyphs" >Scene</text>
<path d="M1175.8 97.3H1406.8A7 7 0 0 1 1413.8 104.3V125.9A7 7 0 0 1 1406.8 132.9H1175.8A7 7 0 0 1 1168.8 125.9V104.3A7 7 0 0 1 1175.8 97.3Z" fill="#444444" stroke="#5c5c5c" stroke-width="1.3" />
<text x="1182.7" y="124" font-size="20.04" fill="#eeeeee" textLength="135.5" lengthAdjust="spacingAndGlyphs" >Cycles Render</text>
<path d="M1397.8 112.9 L1407.8 112.9 L1402.8 103.3 Z" fill="#b4b4b4" />
<path d="M1397.8 117.3 L1407.8 117.3 L1402.8 126.9 Z" fill="#b4b4b4" />
<path d="M1446.6 119.4 L1459.8 109.6 L1453.6 109.600 Q1451.600 109.400 1451.800 107.800 Q1452 106.400 1453.800 106.400 L1461.400 106.400 L1458.200 103.800 Q1457.200 102.600 1458.200 101.600 Q1459.200 100.800 1460.400 101.600 L1471 110 Q1474.600 113.200 1474.200 117.400 Q1473.400 123.800 1466.600 125.800 Q1460 127.200 1455.600 123.400 Q1453.800 121.600 1453.400 119.400 L1449 122.800 Q1447.400 123.600 1446.400 122.400 Q1445.600 120.800 1446.600 119.400 Z" fill="url(#g11)" stroke="#5a3206" stroke-width="1.2" stroke-linejoin="round"/>
<circle cx="1464.2" cy="116.2" r="6.4" fill="#ffffff" />
<circle cx="1464.2" cy="116.2" r="3.8" fill="#2a55a5" />
<text x="1492.8" y="124" font-size="20.04" fill="#0c0c0c" textLength="756.99" lengthAdjust="spacingAndGlyphs" >v2.76 | Verts:8 | Faces:0 | Tris:0 | Objects:1/1 | Lamps:0/0 | Mem:23.83M | Circle</text>
<g clip-path="url(#c12)">
<line x1="2537.1" y1="88" x2="2562" y2="112.9" stroke="#303030" stroke-width="1.7" />
<line x1="2534.9" y1="88" x2="2562" y2="115.1" stroke="#dadada" stroke-width="1.4" stroke-dasharray="1.5 1.2"/>
<line x1="2544" y1="88" x2="2562" y2="106" stroke="#303030" stroke-width="1.7" />
<line x1="2541.8" y1="88" x2="2562" y2="108.2" stroke="#dadada" stroke-width="1.4" stroke-dasharray="1.5 1.2"/>
<line x1="2551.2" y1="88" x2="2562" y2="98.8" stroke="#303030" stroke-width="1.7" />
<line x1="2549" y1="88" x2="2562" y2="101" stroke="#dadada" stroke-width="1.4" stroke-dasharray="1.5 1.2"/>
</g>
<rect x="0" y="141" width="1.2" height="1405" fill="#8a8a8a" />
<path d="M10.8 149.9H34.2V230H10.8A9 9 0 0 1 1.8 221V158.9A9 9 0 0 1 10.8 149.9Z" fill="#cbcbcb" stroke="#a4a4a4" stroke-width="1.2" />
<text transform="translate(27 216.18) rotate(-90)" font-size="22.47" textLength="52.47" lengthAdjust="spacingAndGlyphs" fill="#000">Tools</text>
<path d="M10.6 241H36.4V337.8H10.6A9 9 0 0 1 1.6 328.8V250A9 9 0 0 1 10.6 241Z" fill="#6a9ae8" stroke="#a6a6a6" stroke-width="1.4" />
<rect x="34" y="241.7" width="3" height="95.4" fill="#6a9ae8" />
<text transform="translate(27 324.79) rotate(-90)" font-size="22.47" textLength="70.78" lengthAdjust="spacingAndGlyphs" fill="#000">Create</text>
<path d="M10.8 348.2H34.2V471.4H10.8A9 9 0 0 1 1.8 462.4V357.2A9 9 0 0 1 10.8 348.2Z" fill="#cbcbcb" stroke="#a4a4a4" stroke-width="1.2" />
<text transform="translate(27 458.71) rotate(-90)" font-size="22.47" textLength="97.82" lengthAdjust="spacingAndGlyphs" fill="#000">Relations</text>
<path d="M10.8 482H34.2V617.8H10.8A9 9 0 0 1 1.8 608.8V491A9 9 0 0 1 10.8 482Z" fill="#cbcbcb" stroke="#a4a4a4" stroke-width="1.2" />
<text transform="translate(27 604.19) rotate(-90)" font-size="22.47" textLength="108.59" lengthAdjust="spacingAndGlyphs" fill="#000">Animation</text>
<path d="M10.8 627H34.2V732.4H10.8A9 9 0 0 1 1.8 723.4V636A9 9 0 0 1 10.8 627Z" fill="#cbcbcb" stroke="#a4a4a4" stroke-width="1.2" />
<text transform="translate(27 719.09) rotate(-90)" font-size="22.47" textLength="78.77" lengthAdjust="spacingAndGlyphs" fill="#000">Physics</text>
<path d="M10.8 743.6H34.2V914.2H10.8A9 9 0 0 1 1.8 905.2V752.6A9 9 0 0 1 10.8 743.6Z" fill="#cbcbcb" stroke="#a4a4a4" stroke-width="1.2" />
<text transform="translate(27 900.98) rotate(-90)" font-size="22.47" textLength="144.16" lengthAdjust="spacingAndGlyphs" fill="#000">Grease Pencil</text>
<rect x="36.2" y="141.2" width="322" height="36.6" fill="#c0c0c0" />
<path d="M54 152.2 H68.2 L61.1 166 Z" fill="#545454" />
<text x="77.4" y="167.7" font-size="22.47" fill="#000" textLength="141.79" lengthAdjust="spacingAndGlyphs" >Add Primitive</text>
<rect x="325.9" y="158" width="2.1" height="2.1" fill="#fafafa" />
<rect x="325.9" y="160.1" width="2.1" height="1" fill="#6c6c6c" />
<rect x="325.9" y="161.95" width="2.1" height="2.1" fill="#fafafa" />
<rect x="325.9" y="164.05" width="2.1" height="1" fill="#6c6c6c" />
<rect x="329.93" y="158" width="2.1" height="2.1" fill="#fafafa" />
<rect x="329.93" y="160.1" width="2.1" height="1" fill="#6c6c6c" />
<rect x="329.93" y="161.95" width="2.1" height="2.1" fill="#fafafa" />
<rect x="329.93" y="164.05" width="2.1" height="1" fill="#6c6c6c" />
<rect x="333.96" y="158" width="2.1" height="2.1" fill="#fafafa" />
<rect x="333.96" y="160.1" width="2.1" height="1" fill="#6c6c6c" />
<rect x="333.96" y="161.95" width="2.1" height="2.1" fill="#fafafa" />
<rect x="333.96" y="164.05" width="2.1" height="1" fill="#6c6c6c" />
<rect x="337.99" y="158" width="2.1" height="2.1" fill="#fafafa" />
<rect x="337.99" y="160.1" width="2.1" height="1" fill="#6c6c6c" />
<rect x="337.99" y="161.95" width="2.1" height="2.1" fill="#fafafa" />
<rect x="337.99" y="164.05" width="2.1" height="1" fill="#6c6c6c" />
<rect x="360.9" y="148.8" width="20" height="848.2" fill="#b4b4b4" rx="10" />
<path d="M359.6 1138.6 A11.4 11.4 0 0 0 382.4 1138.6" fill="none" stroke="#a8a8a8" stroke-width="1.2" />
<text x="65.2" y="219.5" font-size="20.04" fill="#000" textLength="56.42" lengthAdjust="spacingAndGlyphs" >Mesh:</text>
<rect x="50.9" y="229.8" width="293.1" height="286.2" fill="#dddddd" rx="8.5" stroke="#bcbcbc" stroke-width="1.8" />
<rect x="51.9" y="263.1" width="291.1" height="1.7" fill="#bdbdbd" />
<rect x="51.9" y="299.1" width="291.1" height="1.7" fill="#bdbdbd" />
<rect x="51.9" y="335.1" width="291.1" height="1.7" fill="#bdbdbd" />
<rect x="51.9" y="371.1" width="291.1" height="1.7" fill="#bdbdbd" />
<rect x="51.9" y="407.2" width="291.1" height="1.7" fill="#bdbdbd" />
<rect x="51.9" y="443.1" width="291.1" height="1.7" fill="#bdbdbd" />
<rect x="51.9" y="479.1" width="291.1" height="1.7" fill="#bdbdbd" />
<g transform="translate(71.6 246.05)">
<rect x="-12" y="-12" width="24" height="24" fill="#fff" rx="0.8" stroke="#0c0c0c" stroke-width="1.7" />
<rect x="-9.4" y="-9.4" width="18.8" height="18.8" fill="url(#g13)" />
</g>
<text x="185.14" y="255.55" font-size="20.04" fill="#000" textLength="52.11" lengthAdjust="spacingAndGlyphs" >Plane</text>
<g transform="translate(71.6 281.1)">
<path d="M0 -12.6 L11.6 -7 V6 L0 12.6 L-11.6 6 V-7 Z" fill="#fff" stroke="#0c0c0c" stroke-width="1.8" stroke-linejoin="round"/>
<path d="M0 -1.2 L10 -6 V5.200 L0 10.800 Z" fill="url(#g14)" />
<path d="M0 -1.2 L-10 -6 V5.200 L0 10.800 Z" fill="url(#g15)" />
<path d="M0 -1.2 L10 -6 L0 -10.800 L-10 -6 Z" fill="#fbfbfb" />
</g>
<text x="186.67" y="290.6" font-size="20.04" fill="#000" textLength="49.06" lengthAdjust="spacingAndGlyphs" >Cube</text>
<g transform="translate(71.6 317.1)">
<circle cx="0" cy="0" r="11.4" fill="#fff" stroke="#0c0c0c" stroke-width="2" />
<circle cx="0" cy="0" r="8.4" fill="url(#g16)" stroke="#c8c8c8" stroke-width="0.8" />
</g>
<text x="184.52" y="326.6" font-size="20.04" fill="#000" textLength="53.35" lengthAdjust="spacingAndGlyphs" >Circle</text>
<g transform="translate(71.6 353.1)">
<circle cx="0" cy="0" r="11.4" fill="url(#g17)" stroke="#0c0c0c" stroke-width="2" />
<path d="M-11 2.600 Q0 5.600 11 2.600 M0 -11 V11 M-4.6 -10 Q-8.600 0 -4.600 10 M4.6 -10 Q8.600 0 4.600 10" fill="none" stroke="#2a2a2a" stroke-width="1.1" />
</g>
<text x="161.26" y="362.6" font-size="20.04" fill="#000" textLength="99.88" lengthAdjust="spacingAndGlyphs" >UV Sphere</text>
<g transform="translate(71.6 389.15)">
<path d="M0 -12.8 L11.4 -6.4 V6.4 L0 12.8 L-11.4 6.4 V-6.4 Z" fill="#f0f0f0" stroke="#0c0c0c" stroke-width="1.8" stroke-linejoin="round"/>
<path d="M0 -12 L10.600 -6 L3 6.800 Z" fill="#bcbcbc" />
<path d="M10.6 -6 V6 L3 6.800 Z" fill="#6e6e6e" />
<path d="M3 6.800 L0 12 L-10.600 6 Z" fill="#a8a8a8" />
<path d="M3 6.800 L0 12 L10.600 6 Z" fill="#565656" />
<path d="M0 -12 L3 6.800 L-10.600 6 Z" fill="#f4f4f4" />
<path d="M0 -12 L-10.600 -6 V6 Z" fill="#dadada" />
<path d="M0 -12 L3 6.800 L10.600 -6 M3 6.800 L-10.600 6 M3 6.800 L0 12 M3 6.800 L10.600 6 M0 -12 L-10.600 6" fill="none" stroke="#333" stroke-width="0.7" />
</g>
<text x="160.88" y="398.65" font-size="20.04" fill="#000" textLength="100.65" lengthAdjust="spacingAndGlyphs" >Ico Sphere</text>
<g transform="translate(71.6 425.15)">
<path d="M-10 -7.4 Q-10 -12.400 0 -12.400 Q10 -12.400 10 -7.400 V7.600 Q10 12.600 0 12.600 Q-10 12.600 -10 7.600 Z" fill="url(#g18)" stroke="#0c0c0c" stroke-width="1.9" />
<ellipse cx="0" cy="-7.2" rx="7.6" ry="3.8" fill="url(#g19)" stroke="#fff" stroke-width="1.3" />
</g>
<text x="171.86" y="434.65" font-size="20.04" fill="#000" textLength="78.67" lengthAdjust="spacingAndGlyphs" >Cylinder</text>
<g transform="translate(71.6 461.1)">
<path d="M0 -13.4 L11.800 6 Q11.800 12.400 0 12.400 Q-11.800 12.400 -11.800 6 Z" fill="url(#g20)" stroke="#0c0c0c" stroke-width="1.8" stroke-linejoin="round"/>
</g>
<text x="186.89" y="470.6" font-size="20.04" fill="#000" textLength="48.62" lengthAdjust="spacingAndGlyphs" >Cone</text>
<g transform="translate(71.6 497.15)">
<ellipse cx="0" cy="0" rx="13.4" ry="9.8" fill="url(#g21)" stroke="#0c0c0c" stroke-width="1.8" />
<ellipse cx="0" cy="-1.2" rx="5.4" ry="2.4" fill="#fafafa" stroke="#0c0c0c" stroke-width="1.5" />
</g>
<text x="186.32" y="506.65" font-size="20.04" fill="#000" textLength="49.75" lengthAdjust="spacingAndGlyphs" >Torus</text>
<rect x="50.9" y="527.6" width="293.1" height="71" fill="#dddddd" rx="8.5" stroke="#bcbcbc" stroke-width="1.8" />
<rect x="51.9" y="561.5" width="291.1" height="1.7" fill="#bdbdbd" />
<g transform="translate(71.6 544.15)">
<g transform="translate(0.6 1.4) scale(0.97)">
<rect x="-11.2" y="-11.6" width="22.4" height="23" fill="#fff" rx="0.8" stroke="#0c0c0c" stroke-width="1.8" />
<rect x="-9.6" y="-10" width="5.4" height="5.6" fill="#f4f4f4" />
<rect x="-8.2" y="-8.6" width="2.4" height="2.4" fill="#c0c0c0" />
<rect x="-9.6" y="-2.9" width="5.4" height="5.6" fill="#f4f4f4" />
<rect x="-8.2" y="-1.5" width="2.4" height="2.4" fill="#c0c0c0" />
<rect x="-9.6" y="4.2" width="5.4" height="5.6" fill="#f4f4f4" />
<rect x="-8.2" y="5.6" width="2.4" height="2.4" fill="#c0c0c0" />
<rect x="-2.7" y="-10" width="5.4" height="5.6" fill="#f4f4f4" />
<rect x="-1.3" y="-8.6" width="2.4" height="2.4" fill="#c0c0c0" />
<rect x="-2.7" y="-2.9" width="5.4" height="5.6" fill="#f4f4f4" />
<rect x="-1.3" y="-1.5" width="2.4" height="2.4" fill="#c0c0c0" />
<rect x="-2.7" y="4.2" width="5.4" height="5.6" fill="#f4f4f4" />
<rect x="-1.3" y="5.6" width="2.4" height="2.4" fill="#c0c0c0" />
<rect x="4.2" y="-10" width="5.4" height="5.6" fill="#f4f4f4" />
<rect x="5.6" y="-8.6" width="2.4" height="2.4" fill="#c0c0c0" />
<rect x="4.2" y="-2.9" width="5.4" height="5.6" fill="#f4f4f4" />
<rect x="5.6" y="-1.5" width="2.4" height="2.4" fill="#c0c0c0" />
<rect x="4.2" y="4.2" width="5.4" height="5.6" fill="#f4f4f4" />
<rect x="5.6" y="5.6" width="2.4" height="2.4" fill="#c0c0c0" />
<path d="M-4 -11 V11 M3 -11 V11 M-11 -4 H11 M-11 3.200 H11" fill="none" stroke="#2a2a2a" stroke-width="1.5" />
</g>
</g>
<text x="191.26" y="553.65" font-size="20.04" fill="#000" textLength="39.87" lengthAdjust="spacingAndGlyphs" >Grid</text>
<g transform="translate(71.6 579.65)">
<path d="M-6 -12 Q-2 -12 0 -8.600 Q2 -12 6 -12 Q10 -11.600 10.400 -6 Q14 -7 14 -3.600 Q13.600 0 9 0.400 Q6.400 2 5.600 4 V10 Q5.400 13.200 0 13.200 Q-5.400 13.200 -5.600 10 V4 Q-6.400 2 -9 0.400 Q-13.600 0 -14 -3.600 Q-14 -7 -10.400 -6 Q-10 -11.600 -6 -12 Z" fill="url(#g22)" stroke="#0c0c0c" stroke-width="1.7" stroke-linejoin="round"/>
<circle cx="-4.6" cy="-4.6" r="2.2" fill="#fff" stroke="#9a9a9a" stroke-width="0.8" />
<circle cx="4.6" cy="-4.6" r="2.2" fill="#fff" stroke="#9a9a9a" stroke-width="0.8" />
<rect x="-2" y="8.4" width="4" height="1.6" fill="#222" />
<rect x="-1.2" y="1" width="2.4" height="2" fill="#c8c8c8" />
</g>
<text x="174.54" y="589.15" font-size="20.04" fill="#000" textLength="73.32" lengthAdjust="spacingAndGlyphs" >Monkey</text>
<text x="65.2" y="634.4" font-size="20.04" fill="#000" textLength="62.45" lengthAdjust="spacingAndGlyphs" >Curve:</text>
<rect x="50.9" y="644.6" width="293.1" height="70.8" fill="#dddddd" rx="8.5" stroke="#bcbcbc" stroke-width="1.8" />
<rect x="51.9" y="678.1" width="291.1" height="1.7" fill="#bdbdbd" />
<g transform="translate(71.6 660.95)">
<g transform="translate(0 2.4)">
<rect x="-10" y="-14.8" width="21" height="3.4" fill="#5c7fd0" opacity="0.75" />
<path d="M0 -12 Q10.4 -2 9.600 4 Q8.800 10 2 9.200 L-6.400 8" fill="none" stroke="#0c0c0c" stroke-width="6" stroke-linecap="round" stroke-linejoin="round"/>
<path d="M0 -12 Q10.4 -2 9.600 4 Q8.800 10 2 9.200 L-6.400 8" fill="none" stroke="#fcfcfc" stroke-width="3.5" stroke-linecap="round" stroke-linejoin="round"/>
<rect x="-13.8" y="-15.8" width="5.6" height="5.6" fill="#dce6fb" stroke="#1c3f94" stroke-width="1.7" />
<rect x="8.2" y="-15.8" width="5.6" height="5.6" fill="#dce6fb" stroke="#1c3f94" stroke-width="1.7" />
</g>
</g>
<text x="181.46" y="670.45" font-size="20.04" fill="#000" textLength="59.48" lengthAdjust="spacingAndGlyphs" >Bezier</text>
<g transform="translate(71.6 696.35)">
<g transform="translate(0 1.4)">
<rect x="-10" y="-13.4" width="21" height="3.4" fill="#5c7fd0" opacity="0.75" />
<circle cx="0" cy="0.4" r="9.9" fill="none" stroke="#0c0c0c" stroke-width="5.6" />
<circle cx="0" cy="0.4" r="9.9" fill="none" stroke="#fcfcfc" stroke-width="3.1" />
<rect x="-13.8" y="-14.4" width="5.6" height="5.6" fill="#dce6fb" stroke="#1c3f94" stroke-width="1.7" />
<rect x="8.2" y="-14.4" width="5.6" height="5.6" fill="#dce6fb" stroke="#1c3f94" stroke-width="1.7" />
</g>
</g>
<text x="184.52" y="705.85" font-size="20.04" fill="#000" textLength="53.35" lengthAdjust="spacingAndGlyphs" >Circle</text>
<rect x="50.9" y="726.6" width="293.1" height="106.9" fill="#dddddd" rx="8.5" stroke="#bcbcbc" stroke-width="1.8" />
<rect x="51.9" y="760.4" width="291.1" height="1.7" fill="#bdbdbd" />
<rect x="51.9" y="796" width="291.1" height="1.7" fill="#bdbdbd" />
<g transform="translate(71.6 743.1)">
<path d="M-11 -11 H4 M-11 -11 V11 M-11 11 H4" fill="none" stroke="#5c7fd0" stroke-width="3.6" opacity="0.8"/>
<path d="M-11 -11 H4 M-11 -11 V11 M-11 11 H4" fill="none" stroke="#c6d4f4" stroke-width="1.4" />
<path d="M11 -11.200 Q-2 -10.400 -2 0 Q-2 10.400 11 11.200" fill="none" stroke="#0c0c0c" stroke-width="6" stroke-linecap="round" stroke-linejoin="round"/>
<path d="M11 -11.200 Q-2 -10.400 -2 0 Q-2 10.400 11 11.200" fill="none" stroke="#fcfcfc" stroke-width="3.5" stroke-linecap="round" stroke-linejoin="round"/>
<rect x="-13.8" y="-13.8" width="5.6" height="5.6" fill="#dce6fb" stroke="#1c3f94" stroke-width="1.7" />
<rect x="-13.8" y="8.2" width="5.6" height="5.6" fill="#dce6fb" stroke="#1c3f94" stroke-width="1.7" />
</g>
<text x="152.14" y="752.6" font-size="20.04" fill="#000" textLength="118.12" lengthAdjust="spacingAndGlyphs" >Nurbs Curve</text>
<g transform="translate(71.6 778.2)">
<circle cx="0" cy="0" r="9.9" fill="none" stroke="#0c0c0c" stroke-width="5.6" />
<circle cx="0" cy="0" r="9.9" fill="none" stroke="#fcfcfc" stroke-width="3.1" />
<rect x="-13.8" y="-13.8" width="5.6" height="5.6" fill="#dce6fb" stroke="#1c3f94" stroke-width="1.7" />
<rect x="-13.8" y="8.2" width="5.6" height="5.6" fill="#dce6fb" stroke="#1c3f94" stroke-width="1.7" />
<rect x="8.2" y="-13.8" width="5.6" height="5.6" fill="#dce6fb" stroke="#1c3f94" stroke-width="1.7" />
<rect x="8.2" y="8.2" width="5.6" height="5.6" fill="#dce6fb" stroke="#1c3f94" stroke-width="1.7" />
</g>
<text x="153.49" y="787.7" font-size="20.04" fill="#000" textLength="115.42" lengthAdjust="spacingAndGlyphs" >Nurbs Circle</text>
<g transform="translate(71.6 814.35)">
<path d="M-12.4 8.600 L-6 8 L-6 14 M-3.400 -0.400 L2.600 -0.800 L2.400 5.400 M3.400 -11.400 L12.400 -11.600 L12 -2.600 M-12 8.800 L11 -10.600" fill="none" stroke="#0c0c0c" stroke-width="4.6" stroke-linecap="round" stroke-linejoin="round"/>
<path d="M-12.4 8.600 L-6 8 L-6 14 M-3.400 -0.400 L2.600 -0.800 L2.400 5.400 M3.400 -11.400 L12.400 -11.600 L12 -2.600 M-12 8.800 L11 -10.600" fill="none" stroke="#f4f6fc" stroke-width="2.2" stroke-linecap="round" stroke-linejoin="round"/>
</g>
<text x="190.33" y="823.85" font-size="20.04" fill="#000" textLength="41.74" lengthAdjust="spacingAndGlyphs" >Path</text>
<text x="65.2" y="869.5" font-size="20.04" fill="#000" textLength="59.2" lengthAdjust="spacingAndGlyphs" >Lamp:</text>
<rect x="50.9" y="880.2" width="293.1" height="178" fill="#dddddd" rx="8.5" stroke="#bcbcbc" stroke-width="1.8" />
<rect x="51.9" y="913.2" width="291.1" height="1.7" fill="#bdbdbd" />
<rect x="51.9" y="949" width="291.1" height="1.7" fill="#bdbdbd" />
<rect x="51.9" y="984.9" width="291.1" height="1.7" fill="#bdbdbd" />
<rect x="51.9" y="1020.8" width="291.1" height="1.7" fill="#bdbdbd" />
<g transform="translate(71.6 896.3)">
<path d="M-3.08 -4.92 L-8.4 -10.24 L-6.35 -12.29 L-13 -13 L-12.29 -6.35 L-10.24 -8.4 L-4.92 -3.08 Z" fill="#f4f2d4" stroke="#8a8650" stroke-width="1.2" stroke-linejoin="round"/>
<path d="M-4.92 3.08 L-10.24 8.4 L-12.29 6.35 L-13 13 L-6.35 12.29 L-8.4 10.24 L-3.08 4.92 Z" fill="#f4f2d4" stroke="#8a8650" stroke-width="1.2" stroke-linejoin="round"/>
<path d="M4.92 -3.08 L10.24 -8.4 L12.29 -6.35 L13 -13 L6.35 -12.29 L8.4 -10.24 L3.08 -4.92 Z" fill="#f4f2d4" stroke="#8a8650" stroke-width="1.2" stroke-linejoin="round"/>
<path d="M3.08 4.92 L8.4 10.24 L6.35 12.29 L13 13 L12.29 6.35 L10.24 8.4 L4.92 3.08 Z" fill="#f4f2d4" stroke="#8a8650" stroke-width="1.2" stroke-linejoin="round"/>
<circle cx="0" cy="0" r="8.6" fill="url(#g23)" />
<circle cx="0" cy="0" r="4.4" fill="#fff" stroke="#5a5420" stroke-width="1.4" />
</g>
<text x="187.61" y="905.8" font-size="20.04" fill="#000" textLength="47.18" lengthAdjust="spacingAndGlyphs" >Point</text>
<g transform="translate(71.6 931.1)">
<path d="M0 -13.6L3.21 -7.76L9.62 -9.62L7.76 -3.21L13.6 0L7.76 3.21L9.62 9.62L3.21 7.76L0 13.6L-3.21 7.76L-9.62 9.62L-7.76 3.21L-13.6 0L-7.76 -3.21L-9.62 -9.62L-3.21 -7.76Z" fill="#f4f2d4" stroke="#8a8650" stroke-width="1.2" stroke-linejoin="round"/>
<circle cx="0" cy="0" r="6" fill="url(#g24)" stroke="#8a7e10" stroke-width="0.9" />
</g>
<text x="193.13" y="940.6" font-size="20.04" fill="#000" textLength="36.15" lengthAdjust="spacingAndGlyphs" >Sun</text>
<g transform="translate(71.6 966.95)">
<path d="M-2.89 2.06 L-10.11 8.88 L-12.11 6.78 L-13 13.4 L-6.34 12.88 L-8.33 10.77 L-1.11 3.94 Z" fill="#f4f2d4" stroke="#8a8650" stroke-width="1.2" stroke-linejoin="round"/>
<g transform="translate(3 -1) rotate(42)">
<rect x="-4.6" y="-15.6" width="9.2" height="8" fill="url(#g25)" rx="1.4" stroke="#0c0c0c" stroke-width="1.4" />
<path d="M-5 -9 H5 L9.600 0.600 Q9.600 4 0 4 Q-9.600 4 -9.600 0.600 Z" fill="url(#g26)" stroke="#0c0c0c" stroke-width="1.5" stroke-linejoin="round"/>
<ellipse cx="0" cy="1" rx="8.6" ry="3.4" fill="url(#g27)" stroke="#7a7420" stroke-width="0.8" />
</g>
</g>
<text x="189.6" y="976.45" font-size="20.04" fill="#000" textLength="43.2" lengthAdjust="spacingAndGlyphs" >Spot</text>
<g transform="translate(71.6 1002.85)">
<circle cx="-4" cy="2" r="9" fill="url(#g28)" />
<path d="M2.48 -4.32 L-10.24 8.4 L-12.29 6.35 L-13 13 L-6.35 12.29 L-8.4 10.24 L4.32 -2.48 Z" fill="#f4f2d4" stroke="#8a8650" stroke-width="1.2" stroke-linejoin="round"/>
<path d="M-8.600 -11.600 Q9.800 -10.800 11.400 10" fill="none" stroke="#8a7a10" stroke-width="5.4" stroke-linecap="round"/>
<path d="M-8.600 -11.600 Q9.800 -10.800 11.400 10" fill="none" stroke="#fbf6c8" stroke-width="2.8" stroke-linecap="round"/>
</g>
<text x="186.32" y="1012.35" font-size="20.04" fill="#000" textLength="49.76" lengthAdjust="spacingAndGlyphs" >Hemi</text>
<g transform="translate(71.6 1039.1)">
<path d="M3.03 -8.3 L-8.37 -8.58 L-8.3 -11.48 L-13 -7.4 L-8.51 -3.09 L-8.43 -5.99 L2.97 -5.7 Z" fill="#f4f2d4" stroke="#8a8650" stroke-width="1.2" stroke-linejoin="round"/>
<path d="M4.7 -1 L4.7 8.4 L1.8 8.4 L6 13 L10.2 8.4 L7.3 8.4 L7.3 -1 Z" fill="#f4f2d4" stroke="#8a8650" stroke-width="1.2" stroke-linejoin="round"/>
<path d="M2.06 -3.9 L-9.33 7.95 L-11.42 5.94 L-12 12.6 L-5.37 11.76 L-7.46 9.75 L3.94 -2.1 Z" fill="#f4f2d4" stroke="#8a8650" stroke-width="1.2" stroke-linejoin="round"/>
<path d="M2 -11.600 L12 -1.400" fill="none" stroke="#8a7a10" stroke-width="5.8" stroke-linecap="round"/>
<path d="M2 -11.600 L12 -1.400" fill="none" stroke="#fbf6c8" stroke-width="3.2" stroke-linecap="round"/>
</g>
<text x="189.34" y="1048.6" font-size="20.04" fill="#000" textLength="43.72" lengthAdjust="spacingAndGlyphs" >Area</text>
<text x="64.8" y="1094.2" font-size="20.04" fill="#000" textLength="60.01" lengthAdjust="spacingAndGlyphs" >Other:</text>
<g clip-path="url(#c29)">
<rect x="50.9" y="1104.7" width="293.1" height="69.9" fill="#dddddd" rx="8.5" stroke="#bcbcbc" stroke-width="1.8" />
<rect x="51.9" y="1137.8" width="291.1" height="1.7" fill="#bdbdbd" />
<g transform="translate(71.6 1120.85)">
<path d="M-8.600 -11.600 H9.200 V-5 H6.600 L6 -8.600 H-1.400 V-1.800 H2.200 L2.800 -4.200 H5 V3.800 H2.800 L2.200 1.400 H-1.400 V8.600 L1.800 9.200 V11.600 H-8.600 V9.200 L-5.800 8.600 V-8.600 L-8.600 -9.200 Z" fill="url(#g30)" stroke="#5a2c00" stroke-width="1.3" stroke-linejoin="round"/>
</g>
<text x="191.99" y="1130.35" font-size="20.04" fill="#000" textLength="38.43" lengthAdjust="spacingAndGlyphs" >Text</text>
<g transform="translate(71.6 1155.8)">
<path d="M-3 -12 H3 V-6 H9.600 Q13 -6 13 -3 Q13 0 9.600 0 H3 V12 H-3 V0 H-9.600 Q-13 0 -13 -3 Q-13 -6 -9.600 -6 H-3 Z" fill="url(#g31)" stroke="#5a2c00" stroke-width="1.5" stroke-linejoin="round"/>
</g>
<text x="166.6" y="1165.3" font-size="20.04" fill="#000" textLength="89.2" lengthAdjust="spacingAndGlyphs" >Armature</text>
</g>
<rect x="0" y="1155.6" width="390" height="1.2" fill="#8c8c8c" />
<rect x="0" y="1156.6" width="358" height="38.6" fill="#c0c0c0" />
<rect x="0" y="1156.6" width="358" height="1.2" fill="#cdcdcd" />
<path d="M18 1170.2 H31.4 L24.7 1183.4 Z" fill="#545454" />
<text x="40.7" y="1186" font-size="22.47" fill="#000" textLength="107.82" lengthAdjust="spacingAndGlyphs" >Add Circle</text>
<rect x="325.9" y="1176" width="2.1" height="2.1" fill="#fafafa" />
<rect x="325.9" y="1178.1" width="2.1" height="1" fill="#6c6c6c" />
<rect x="325.9" y="1179.95" width="2.1" height="2.1" fill="#fafafa" />
<rect x="325.9" y="1182.05" width="2.1" height="1" fill="#6c6c6c" />
<rect x="329.93" y="1176" width="2.1" height="2.1" fill="#fafafa" />
<rect x="329.93" y="1178.1" width="2.1" height="1" fill="#6c6c6c" />
<rect x="329.93" y="1179.95" width="2.1" height="2.1" fill="#fafafa" />
<rect x="329.93" y="1182.05" width="2.1" height="1" fill="#6c6c6c" />
<rect x="333.96" y="1176" width="2.1" height="2.1" fill="#fafafa" />
<rect x="333.96" y="1178.1" width="2.1" height="1" fill="#6c6c6c" />
<rect x="333.96" y="1179.95" width="2.1" height="2.1" fill="#fafafa" />
<rect x="333.96" y="1182.05" width="2.1" height="1" fill="#6c6c6c" />
<rect x="337.99" y="1176" width="2.1" height="2.1" fill="#fafafa" />
<rect x="337.99" y="1178.1" width="2.1" height="1" fill="#6c6c6c" />
<rect x="337.99" y="1179.95" width="2.1" height="2.1" fill="#fafafa" />
<rect x="337.99" y="1182.05" width="2.1" height="1" fill="#6c6c6c" />
<rect x="361.1" y="1165.8" width="20" height="223" fill="#b4b4b4" rx="10" />
<path d="M359.8 1527.6 A11.4 11.4 0 0 0 382.6 1527.6" fill="none" stroke="#a8a8a8" stroke-width="1.2" />
<text x="27.6" y="1236.6" font-size="20.04" fill="#000" textLength="75.78" lengthAdjust="spacingAndGlyphs" >Vertices</text>
<rect x="14" y="1246.8" width="329.8" height="34.2" fill="#d5d5d5" rx="17.1" stroke="#8e8e8e" stroke-width="1.4" />
<path d="M24.2 1263.9 L31 1258.7 L31 1269.1 Z" fill="#b2b2b2" />
<path d="M333.6 1263.9 L326.8 1258.7 L326.8 1269.1 Z" fill="#b2b2b2" />
<text x="303.31" y="1272.6" font-size="20.04" fill="#000" textLength="12.09" lengthAdjust="spacingAndGlyphs" >8</text>
<text x="27.6" y="1316.8" font-size="20.04" fill="#000" textLength="63.71" lengthAdjust="spacingAndGlyphs" >Radius</text>
<rect x="14" y="1327" width="329.8" height="34.2" fill="#d5d5d5" rx="17.1" stroke="#8e8e8e" stroke-width="1.4" />
<path d="M24.2 1344.1 L31 1338.9 L31 1349.3 Z" fill="#b2b2b2" />
<path d="M333.6 1344.1 L326.8 1338.9 L326.8 1349.3 Z" fill="#b2b2b2" />
<text x="284.8" y="1352.8" font-size="20.04" fill="#000" textLength="30.6" lengthAdjust="spacingAndGlyphs" >1m</text>
<text x="27.6" y="1396.6" font-size="20.04" fill="#000" textLength="75.06" lengthAdjust="spacingAndGlyphs" >Fill Type</text>
<path d="M20.6 1406.4H336.6A7 7 0 0 1 343.6 1413.4V1434.4A7 7 0 0 1 336.6 1441.4H20.6A7 7 0 0 1 13.6 1434.4V1413.4A7 7 0 0 1 20.6 1406.4Z" fill="#444444" stroke="#5c5c5c" stroke-width="1.3" />
<text x="27.6" y="1431" font-size="20.04" fill="#f0f0f0" textLength="74.71" lengthAdjust="spacingAndGlyphs" >Nothing</text>
<path d="M328.2 1421.8 L337.8 1421.8 L333 1412.8 Z" fill="#b4b4b4" />
<path d="M328.2 1426.2 L337.8 1426.2 L333 1435.2 Z" fill="#b4b4b4" />
<rect x="19.6" y="1458.2" width="22.4" height="21.6" fill="#444444" rx="5.4" stroke="#6a6a6a" stroke-width="1.2" />
<text x="56.4" y="1477.6" font-size="20.04" fill="#000" textLength="123.9" lengthAdjust="spacingAndGlyphs" >Align to View</text>
<text x="27.6" y="1522.2" font-size="20.04" fill="#000" textLength="80.36" lengthAdjust="spacingAndGlyphs" >Location</text>
<g clip-path="url(#c32)">
<rect x="14" y="1531.6" width="329.8" height="34.2" fill="#d5d5d5" rx="17.1" stroke="#8e8e8e" stroke-width="1.4" />
<path d="M24.2 1548.7 L31 1543.5 L31 1553.9 Z" fill="#b2b2b2" />
<path d="M333.6 1548.7 L326.8 1543.5 L326.8 1553.9 Z" fill="#b2b2b2" />
<text x="284.8" y="1557.4" font-size="20.04" fill="#000" textLength="30.6" lengthAdjust="spacingAndGlyphs" >0m</text>
<text x="42" y="1557.4" font-size="20.04" fill="#000" textLength="19.42" lengthAdjust="spacingAndGlyphs" >X:</text>
</g>
<path d="M21 1552.2H62.6A6 6 0 0 1 68.6 1558.2V1581.6A6 6 0 0 1 62.6 1587.6H21A6 6 0 0 1 15 1581.6V1558.2A6 6 0 0 1 21 1552.2Z" fill="#444444" stroke="#686868" stroke-width="1.3" />
<g transform="translate(37.4 1570.3) scale(0.98)">
<path d="M0 -12.600 L11.600 -7.400 V6.400 L0 12.600 L-11.600 6.400 V-7.400 Z" fill="#ffffff" stroke="#0a0a0a" stroke-width="1.9" stroke-linejoin="round"/>
<path d="M0 -1.600 L10.200 -6.400 V5.600 L0 11 Z" fill="url(#g33)" />
<path d="M0 -1.600 L-10.200 -6.400 V5.600 L0 11 Z" fill="url(#g34)" />
<path d="M0 -1.600 L10.200 -6.400 L0 -11.200 L-10.200 -6.400 Z" fill="#ffffff" />
</g>
<path d="M52.2 1567.7 L62.2 1567.7 L57.2 1558.1 Z" fill="#b4b4b4" />
<path d="M52.2 1572.1 L62.2 1572.1 L57.2 1581.7 Z" fill="#b4b4b4" />
<text x="91" y="1579.1" font-size="20.04" fill="#000" textLength="45.09" lengthAdjust="spacingAndGlyphs" >View</text>
<text x="173.2" y="1579.1" font-size="20.04" fill="#000" textLength="58.61" lengthAdjust="spacingAndGlyphs" >Select</text>
<text x="268.6" y="1579.1" font-size="20.04" fill="#000" textLength="36.78" lengthAdjust="spacingAndGlyphs" >Add</text>
<text x="341" y="1579.1" font-size="20.04" fill="#000" textLength="61.88" lengthAdjust="spacingAndGlyphs" >Object</text>
<path d="M433.6 1552.2H629.6A7 7 0 0 1 636.6 1559.2V1580.6A7 7 0 0 1 629.6 1587.6H433.6A7 7 0 0 1 426.6 1580.6V1559.2A7 7 0 0 1 433.6 1552.2Z" fill="#444444" stroke="#686868" stroke-width="1.3" />
<g transform="translate(448.8 1569.9) scale(0.96)">
<path d="M0 -12.600 L11.600 -7.400 V6.400 L0 12.600 L-11.600 6.400 V-7.400 Z" fill="#fbe2c0" stroke="#3a1c00" stroke-width="1.9" stroke-linejoin="round"/>
<path d="M0 -1.600 L10.200 -6.400 V5.600 L0 11 Z" fill="url(#g35)" />
<path d="M0 -1.600 L-10.200 -6.400 V5.600 L0 11 Z" fill="url(#g36)" />
<path d="M0 -1.600 L10.200 -6.400 L0 -11.200 L-10.200 -6.400 Z" fill="#fcd8a8" />
</g>
<text x="469.3" y="1579.1" font-size="20.04" fill="#eeeeee" textLength="119.69" lengthAdjust="spacingAndGlyphs" >Object Mode</text>
<path d="M620.4 1567.7 L630.4 1567.7 L625.4 1558.1 Z" fill="#b4b4b4" />
<path d="M620.4 1572.1 L630.4 1572.1 L625.4 1581.7 Z" fill="#b4b4b4" />
<path d="M653.4 1552.2H701.8A7 7 0 0 1 708.8 1559.2V1580.6A7 7 0 0 1 701.8 1587.6H653.4A7 7 0 0 1 646.4 1580.6V1559.2A7 7 0 0 1 653.4 1552.2Z" fill="#444444" stroke="#686868" stroke-width="1.3" />
<circle cx="667.7" cy="1569.4" r="11.4" fill="url(#g37)" stroke="#0a0a0a" stroke-width="1.7" />
<path d="M692.4 1567.7 L702.4 1567.7 L697.4 1558.1 Z" fill="#b4b4b4" />
<path d="M692.4 1572.1 L702.4 1572.1 L697.4 1581.7 Z" fill="#b4b4b4" />
<path d="M725.3 1552.2H778.8V1587.6H725.3A7 7 0 0 1 718.3 1580.6V1559.2A7 7 0 0 1 725.3 1552.2Z" fill="#444444" stroke="#686868" stroke-width="1.3" />
<circle cx="734.1" cy="1564.4" r="7.8" fill="url(#g38)" stroke="#0a0a0a" stroke-width="1.5" />
<circle cx="742.6" cy="1574.8" r="8.2" fill="url(#g38)" stroke="#0a0a0a" stroke-width="1.5" />
<rect x="734.7" y="1566.9" width="5.8" height="5.8" fill="#cfe0ff" stroke="#1458d8" stroke-width="1.8" />
<path d="M764.3 1567.7 L774.3 1567.7 L769.3 1558.1 Z" fill="#b4b4b4" />
<path d="M764.3 1572.1 L774.3 1572.1 L769.3 1581.7 Z" fill="#b4b4b4" />
<path d="M778.8 1552.2H808.6A7 7 0 0 1 815.6 1559.2V1580.6A7 7 0 0 1 808.6 1587.6H778.8V1552.2Z" fill="#b8b8b8" stroke="#9c9c9c" stroke-width="1.3" />
<rect x="786.8" y="1558.4" width="4.8" height="4.8" fill="#c4d6f8" rx="1.2" stroke="#2a58a8" stroke-width="1.5" />
<rect x="795.5" y="1558.4" width="4.8" height="4.8" fill="#c4d6f8" rx="1.2" stroke="#2a58a8" stroke-width="1.5" />
<rect x="804.8" y="1558.4" width="4.8" height="4.8" fill="#c4d6f8" rx="1.2" stroke="#2a58a8" stroke-width="1.5" />
<path d="M785 1574.8 L793.400 1567 M785 1574.800 L793.400 1582.600 M785 1574.800 H811.400 M811.400 1574.800 L803 1567 M811.400 1574.800 L803 1582.600" fill="none" stroke="#1a1a1a" stroke-width="4.6" stroke-linecap="round" stroke-linejoin="round"/>
<path d="M785 1574.8 L793.400 1567 M785 1574.800 L793.400 1582.600 M785 1574.800 H811.400 M811.400 1574.800 L803 1567 M811.400 1574.800 L803 1582.600" fill="none" stroke="#ffffff" stroke-width="2.2" stroke-linecap="round" stroke-linejoin="round"/>
<path d="M834.6 1552.2H1094.8A8 8 0 0 1 1102.8 1560.2V1579.6A8 8 0 0 1 1094.8 1587.6H834.6A8 8 0 0 1 826.6 1579.6V1560.2A8 8 0 0 1 834.6 1552.2Z" fill="#444444" stroke="#7c7c7c" stroke-width="1.3" />
<path d="M834.8 1553.8H860.4V1586H834.8A7 7 0 0 1 827.8 1579V1560.8A7 7 0 0 1 834.8 1553.8Z" fill="#5680c2" />
<rect x="862" y="1553.8" width="34.2" height="32.2" fill="#5680c2" />
<rect x="860.2" y="1552.8" width="1.8" height="34.2" fill="#6c6c6c" />
<rect x="896.1" y="1552.8" width="1.8" height="34.2" fill="#6c6c6c" />
<rect x="932.1" y="1552.8" width="1.8" height="34.2" fill="#6c6c6c" />
<rect x="967.5" y="1552.8" width="1.8" height="34.2" fill="#6c6c6c" />
<path d="M843.7 1574 L832.800 1580.800" fill="none" stroke="#5a1408" stroke-width="5.6" stroke-linecap="round"/>
<path d="M843.7 1574 L832.800 1580.800" fill="none" stroke="#e04a28" stroke-width="3.4" stroke-linecap="round"/>
<path d="M843.7 1574 L855.200 1580.800" fill="none" stroke="#2a5a08" stroke-width="5.6" stroke-linecap="round"/>
<path d="M843.7 1574 L855.200 1580.800" fill="none" stroke="#6cc81c" stroke-width="3.4" stroke-linecap="round"/>
<path d="M843.7 1574 V1558.600" fill="none" stroke="#12306c" stroke-width="5.6" stroke-linecap="round"/>
<path d="M843.7 1574 V1558.600" fill="none" stroke="#5c9cf4" stroke-width="3.4" stroke-linecap="round"/>
<rect x="842.3" y="1557.6" width="2.8" height="2.8" fill="#fff" />
<rect x="831.4" y="1579.4" width="2.8" height="2.8" fill="#fff" />
<rect x="853.8" y="1579.4" width="2.8" height="2.8" fill="#fff" />
<circle cx="843.7" cy="1574" r="2" fill="#fff" />
<path d="M868.6 1579.400 L881 1567.600 L877.400 1563.800 L890.800 1558.200 L886.400 1573 L882.800 1569.400 L870.600 1581.400 Q868.600 1582.400 867.800 1581 Q867.200 1580 868.600 1579.400 Z" fill="url(#g39)" stroke="#0e2450" stroke-width="1.7" stroke-linejoin="round"/>
<path d="M905.4 1579 Q906.400 1562 923.400 1559.800" fill="none" stroke="#1c2c4c" stroke-width="5.8" stroke-linecap="round"/>
<path d="M905.4 1579 Q906.400 1562 923.400 1559.800" fill="none" stroke="#4c70a8" stroke-width="3.4" stroke-linecap="round"/>
<path d="M904.8 1577 Q906 1562.400 921 1559.400" fill="none" stroke="#8ea6c8" stroke-width="0.9" stroke-linecap="round"/>
<path d="M940.6 1579.200 L952.600 1567.400" fill="none" stroke="#1c2c4c" stroke-width="5.4" stroke-linecap="round"/>
<rect x="951.2" y="1558.6" width="11.4" height="11.2" fill="#5c7aac" stroke="#1c2c4c" stroke-width="1.6" />
<path d="M940.6 1579.200 L952.600 1567.400" fill="none" stroke="#5476a8" stroke-width="3" stroke-linecap="round"/>
<text x="983" y="1579.1" font-size="20.04" fill="#eeeeee" textLength="60.61" lengthAdjust="spacingAndGlyphs" >Global</text>
<path d="M1086.4 1567.7 L1096.4 1567.7 L1091.4 1558.1 Z" fill="#b4b4b4" />
<path d="M1086.4 1572.1 L1096.4 1572.1 L1091.4 1581.7 Z" fill="#b4b4b4" />
<rect x="1112.6" y="1552.4" width="89" height="35.2" fill="#858585" rx="8" />
<path d="M1120.8 1553.9H1130.55V1568.1H1114.3V1560.4A6.5 6.5 0 0 1 1120.8 1553.9Z" fill="#b8b8b8" />
<circle cx="1120.7" cy="1561" r="4.3" fill="url(#g40)" stroke="#7a7a7a" stroke-width="1.1" />
<path d="M1132.3 1553.9H1148.55V1568.1H1132.3V1553.9Z" fill="#b8b8b8" />
<circle cx="1138.7" cy="1561" r="4.3" fill="url(#g41)" stroke="#7a7a7a" stroke-width="1.1" />
<path d="M1150.3 1553.9H1166.55V1568.1H1150.3V1553.9Z" fill="#b8b8b8" />
<circle cx="1156.7" cy="1561" r="4.3" fill="url(#g42)" stroke="#7a7a7a" stroke-width="1.1" />
<path d="M1168.3 1553.9H1184.55V1568.1H1168.3V1553.9Z" fill="#b8b8b8" />
<circle cx="1174.7" cy="1561" r="4.3" fill="url(#g43)" stroke="#7a7a7a" stroke-width="1.1" />
<path d="M1186.3 1553.9H1195.75A6.5 6.5 0 0 1 1202.25 1560.4V1568.1H1186.3V1553.9Z" fill="#b8b8b8" />
<circle cx="1192.7" cy="1561" r="4.3" fill="url(#g44)" stroke="#7a7a7a" stroke-width="1.1" />
<path d="M1114.3 1569.9H1130.55V1585.9H1120.8A6.5 6.5 0 0 1 1114.3 1579.4V1569.9Z" fill="#5680c2" />
<circle cx="1120.7" cy="1576.9" r="4.3" fill="url(#g45)" stroke="#3a1c00" stroke-width="1.3" />
<path d="M1132.3 1569.9H1148.55V1585.9H1132.3V1569.9Z" fill="#b8b8b8" />
<path d="M1150.3 1569.9H1166.55V1585.9H1150.3V1569.9Z" fill="#b8b8b8" />
<path d="M1168.3 1569.9H1184.55V1585.9H1168.3V1569.9Z" fill="#b8b8b8" />
<path d="M1186.3 1569.9H1202.25V1579.4A6.5 6.5 0 0 1 1195.75 1585.9H1186.3V1569.9Z" fill="#b8b8b8" />
<rect x="1211.5" y="1552.4" width="89" height="35.2" fill="#858585" rx="8" />
<path d="M1219.7 1553.9H1229.45V1568.1H1213.2V1560.4A6.5 6.5 0 0 1 1219.7 1553.9Z" fill="#b8b8b8" />
<circle cx="1219.6" cy="1561" r="4.3" fill="url(#g46)" stroke="#7a7a7a" stroke-width="1.1" />
<path d="M1231.2 1553.9H1247.45V1568.1H1231.2V1553.9Z" fill="#b8b8b8" />
<circle cx="1237.6" cy="1561" r="4.3" fill="url(#g47)" stroke="#7a7a7a" stroke-width="1.1" />
<path d="M1249.2 1553.9H1265.45V1568.1H1249.2V1553.9Z" fill="#b8b8b8" />
<circle cx="1255.6" cy="1561" r="4.3" fill="url(#g48)" stroke="#7a7a7a" stroke-width="1.1" />
<path d="M1267.2 1553.9H1283.45V1568.1H1267.2V1553.9Z" fill="#b8b8b8" />
<path d="M1285.2 1553.9H1294.65A6.5 6.5 0 0 1 1301.15 1560.4V1568.1H1285.2V1553.9Z" fill="#b8b8b8" />
<path d="M1213.2 1569.9H1229.45V1585.9H1219.7A6.5 6.5 0 0 1 1213.2 1579.4V1569.9Z" fill="#b8b8b8" />
<path d="M1231.2 1569.9H1247.45V1585.9H1231.2V1569.9Z" fill="#b8b8b8" />
<path d="M1249.2 1569.9H1265.45V1585.9H1249.2V1569.9Z" fill="#b8b8b8" />
<path d="M1267.2 1569.9H1283.45V1585.9H1267.2V1569.9Z" fill="#b8b8b8" />
<path d="M1285.2 1569.9H1301.15V1579.4A6.5 6.5 0 0 1 1294.65 1585.9H1285.2V1569.9Z" fill="#b8b8b8" />
<circle cx="1291.6" cy="1576.9" r="4.3" fill="url(#g49)" stroke="#7a7a7a" stroke-width="1.1" />
<path d="M1319.2 1552.2H1337A8 8 0 0 1 1345 1560.2V1579.6A8 8 0 0 1 1337 1587.6H1319.2A8 8 0 0 1 1311.2 1579.6V1560.2A8 8 0 0 1 1319.2 1552.2Z" fill="#5680c2" stroke="#8a8a8a" stroke-width="1.8" />
<rect x="1315" y="1558" width="19.6" height="22.2" fill="url(#g50)" rx="1.6" stroke="#18243c" stroke-width="1.7" />
<rect x="1317.6" y="1575.4" width="1.8" height="1.8" fill="#2a3a5c" />
<rect x="1320.8" y="1575.6" width="9" height="1.4" fill="#4a5a80" />
<rect x="1333.2" y="1563" width="7.2" height="11" fill="none" rx="3.6" stroke="#1a1a1a" stroke-width="4.4" />
<rect x="1333.2" y="1572.4" width="7.2" height="11" fill="none" rx="3.6" stroke="#1a1a1a" stroke-width="4.4" />
<rect x="1333.2" y="1563" width="7.2" height="11" fill="none" rx="3.6" stroke="#f4f4f4" stroke-width="2.2" />
<rect x="1333.2" y="1572.4" width="7.2" height="11" fill="none" rx="3.6" stroke="#f4f4f4" stroke-width="2.2" />
<path d="M1364.4 1552.2H1382.2A8 8 0 0 1 1390.2 1560.2V1579.6A8 8 0 0 1 1382.2 1587.6H1364.4A8 8 0 0 1 1356.4 1579.6V1560.2A8 8 0 0 1 1364.4 1552.2Z" fill="#b8b8b8" stroke="#9c9c9c" stroke-width="1.6" />
<circle cx="1372.9" cy="1569.4" r="9.7" fill="url(#g51)" stroke="#666" stroke-width="1.5" />
<circle cx="1372.9" cy="1569.4" r="4.6" fill="#9c9c9c" opacity="0.7"/>
<path d="M1409.2 1552.2H1695A8 8 0 0 1 1703 1560.2V1579.6A8 8 0 0 1 1695 1587.6H1409.2A8 8 0 0 1 1401.2 1579.6V1560.2A8 8 0 0 1 1409.2 1552.2Z" fill="#444444" stroke="#7c7c7c" stroke-width="1.3" />
<path d="M1409.6 1553.8H1434.2V1586H1409.6A7 7 0 0 1 1402.6 1579V1560.8A7 7 0 0 1 1409.6 1553.8Z" fill="#5680c2" />
<rect x="1629.8" y="1553.2" width="36.4" height="33.4" fill="#b8b8b8" />
<path d="M1667.2 1553.2H1695A7 7 0 0 1 1702 1560.2V1579.6A7 7 0 0 1 1695 1586.6H1667.2V1553.2Z" fill="#b8b8b8" />
<rect x="1665.6" y="1553.2" width="1.6" height="33.4" fill="#9a9a9a" />
<rect x="1496.6" y="1552.8" width="1.8" height="34.2" fill="#383838" />
<g transform="translate(1419 1569.6) rotate(35)">
<path d="M-8.400 10 V-1 A8.400 8.400 0 0 1 8.400 -1 V10 H3.200 V-1 A3.200 3.200 0 0 0 -3.200 -1 V10 Z" fill="#ec6a20" stroke="#1a0a00" stroke-width="1.7" stroke-linejoin="round"/>
<rect x="-8.4" y="5" width="5.2" height="5" fill="#f6f6f6" stroke="#1a0a00" stroke-width="1.3" />
<rect x="3.2" y="5" width="5.2" height="5" fill="#f6f6f6" stroke="#1a0a00" stroke-width="1.3" />
</g>
<g transform="translate(1456.2 1570.1) scale(0.92)">
<path d="M0 -12.600 L11.600 -7.400 V6.400 L0 12.600 L-11.600 6.400 V-7.400 Z" fill="#8c8c8c" stroke="#0a0a0a" stroke-width="1.9" stroke-linejoin="round"/>
<path d="M0 -1.600 L10.200 -6.400 V5.600 L0 11 Z" fill="url(#g52)" />
<path d="M0 -1.600 L-10.200 -6.400 V5.600 L0 11 Z" fill="url(#g53)" />
<path d="M0 -1.600 L10.200 -6.400 L0 -11.200 L-10.200 -6.400 Z" fill="#8c8c8c" />
</g>
<path d="M1456.2 1568.300 L1446.800 1563.900 V1575 L1456.200 1580 Z" fill="#ffffff" />
<path d="M1482.2 1567.7 L1492.2 1567.7 L1487.2 1558.1 Z" fill="#b4b4b4" />
<path d="M1482.2 1572.1 L1492.2 1572.1 L1487.2 1581.7 Z" fill="#b4b4b4" />
<text x="1511.6" y="1579.1" font-size="20.04" fill="#eeeeee" textLength="69.11" lengthAdjust="spacingAndGlyphs" >Closest</text>
<path d="M1615.3 1567.7 L1625.3 1567.7 L1620.3 1558.1 Z" fill="#b4b4b4" />
<path d="M1615.3 1572.1 L1625.3 1572.1 L1620.3 1581.7 Z" fill="#b4b4b4" />
<circle cx="1645.6" cy="1571.8" r="10.2" fill="url(#g54)" stroke="#2a2a2a" stroke-width="1.4" />
<path d="M1651.6 1567.400 L1662 1557.600" fill="none" stroke="#0e3aa8" stroke-width="5.4" stroke-linecap="round"/>
<path d="M1651.6 1567.400 L1662 1557.600" fill="none" stroke="#ffffff" stroke-width="2.4" stroke-linecap="round"/>
<circle cx="1651.6" cy="1567.4" r="3.9" fill="#ffffff" stroke="#0e3aa8" stroke-width="2.2" />
<circle cx="1682" cy="1565.4" r="10.2" fill="url(#g55)" stroke="#2a2a2a" stroke-width="1.4" />
<circle cx="1682" cy="1565.4" r="6" fill="none" stroke="#c4c4c4" stroke-width="1" />
<rect x="1683.4" y="1568" width="12.2" height="12.4" fill="#8cacec" stroke="#5c80cc" stroke-width="1.2" opacity="0.8" />
<rect x="1680.7" y="1565.3" width="5.4" height="5.4" fill="#ffffff" rx="1.2" stroke="#0a0a0a" stroke-width="1.5" />
<rect x="1692.9" y="1565.3" width="5.4" height="5.4" fill="#ffffff" rx="1.2" stroke="#0a0a0a" stroke-width="1.5" />
<rect x="1680.7" y="1577.7" width="5.4" height="5.4" fill="#ffffff" rx="1.2" stroke="#0a0a0a" stroke-width="1.5" />
<rect x="1692.9" y="1577.7" width="5.4" height="5.4" fill="#ffffff" rx="1.2" stroke="#0a0a0a" stroke-width="1.5" />
<path d="M1722 1552.2H1748V1587.6H1722A8 8 0 0 1 1714 1579.6V1560.2A8 8 0 0 1 1722 1552.2Z" fill="#dddddd" stroke="#a8a8a8" stroke-width="1.3" />
<path d="M1748 1552.2H1776A8 8 0 0 1 1784 1560.2V1579.6A8 8 0 0 1 1776 1587.6H1748V1552.2Z" fill="#dddddd" stroke="#a8a8a8" stroke-width="1.3" />
<g transform="translate(1718 1558.4) scale(1)">
<rect x="2.4" y="0" width="5.6" height="4" fill="#d8d8d8" rx="1.2" stroke="#0a0a0a" stroke-width="1.2" />
<rect x="0" y="2.8" width="25.2" height="19.6" fill="url(#g56)" rx="2.4" stroke="#0a0a0a" stroke-width="1.6" />
<rect x="4.4" y="6.6" width="2.4" height="2.2" fill="#e01010" />
<circle cx="15.2" cy="13.6" r="6.8" fill="#e8e8e8" stroke="#8a8a8a" stroke-width="0.8" />
<circle cx="15.2" cy="13.6" r="4.8" fill="url(#g57)" />
<circle cx="22" cy="1.2" r="6.4" fill="url(#g58)" />
<path d="M22 -2.600 V5 M18.200 1.200 H25.800" fill="none" stroke="#ffffff" stroke-width="2.4" />
</g>
<rect x="1754.4" y="1568.8" width="23.6" height="14" fill="url(#g59)" stroke="#0a0a0a" stroke-width="1.6" />
<rect x="1754.4" y="1568.8" width="23.6" height="4.4" fill="#1a1a1a" />
<rect x="1757.6" y="1570" width="3.8" height="2.2" fill="#f4f4f4" />
<rect x="1764.2" y="1570" width="3.8" height="2.2" fill="#f4f4f4" />
<rect x="1770.8" y="1570" width="3.8" height="2.2" fill="#f4f4f4" />
<path d="M1753.600 1564.600 L1775 1556.200 L1776.600 1560.600 L1755.200 1569 Z" fill="#1a1a1a" stroke="#0a0a0a" stroke-width="1" />
<path d="M1758.05 1563.69 l3.600 -1.400 l0.800 2.200 l-3.600 1.400 Z" fill="#f4f4f4" />
<path d="M1764.47 1561.17 l3.600 -1.400 l0.800 2.200 l-3.600 1.400 Z" fill="#f4f4f4" />
<path d="M1770.89 1558.65 l3.600 -1.400 l0.800 2.200 l-3.600 1.400 Z" fill="#f4f4f4" />
<path d="M1753.200 1563.600 L1757 1566 V1573 L1753.200 1573.400 Z" fill="#5c8cd8" stroke="#12306c" stroke-width="0.8" />
<path d="M1766 1577.600 H1774 M1770 1574.400 V1581" fill="none" stroke="#8a8a8a" stroke-width="1.4" />
<path d="M1803 1552.2H1820.6A8 8 0 0 1 1828.6 1560.2V1579.6A8 8 0 0 1 1820.6 1587.6H1803A8 8 0 0 1 1795 1579.6V1560.2A8 8 0 0 1 1803 1552.2Z" fill="#dddddd" stroke="#a8a8a8" stroke-width="1.3" />
<path d="M1803.6 1565 H1822.400 L1813 1576.600 Z" fill="url(#g60)" stroke="#1a1a1a" stroke-width="1.7" stroke-linejoin="round"/>
<path d="M0 1585 V1593 H8 Q0 1593 0 1585 Z" fill="#0b0909" />
<rect x="2126.8" y="139.2" width="434" height="2" fill="#5a5a5a" />
<rect x="2126.8" y="141" width="434" height="43.8" fill="#ababab" />
<rect x="2126.8" y="184.6" width="434" height="2.2" fill="#b8b8b8" />
<rect x="2126.8" y="186.8" width="434" height="200" fill="#b1b1b1" />
<g clip-path="url(#c61)">
<rect x="2126.8" y="187" width="294.5" height="33.9" fill="#7297d5" />
<rect x="2126.8" y="220.9" width="434" height="36.5" fill="#b6b6b6" />
<rect x="2126.8" y="257.4" width="434" height="35.9" fill="#adadad" />
<rect x="2126.8" y="293.3" width="434" height="36.6" fill="#b8b8b8" />
<rect x="2126.8" y="329.9" width="434" height="36.1" fill="#adadad" />
<rect x="2421.3" y="186.8" width="140" height="34.1" fill="#b6b6b6" />
<rect x="2421.6" y="186.8" width="1.6" height="169.2" fill="#a2a2a2" />
<rect x="2457.2" y="186.8" width="1.6" height="169.2" fill="#a2a2a2" />
<rect x="2493" y="186.8" width="1.6" height="169.2" fill="#a2a2a2" />
<line x1="2147" y1="204.2" x2="2170" y2="204.2" stroke="#7f7a74" stroke-width="1.2" />
<line x1="2169.4" y1="204.2" x2="2169.4" y2="360" stroke="#7f7a74" stroke-width="1.2" />
<line x1="2183" y1="312.3" x2="2203" y2="312.3" stroke="#7f7a74" stroke-width="1.2" />
<line x1="2183" y1="348.3" x2="2206" y2="348.3" stroke="#7f7a74" stroke-width="1.2" />
<circle cx="2140.5" cy="203.2" r="7.3" fill="#f4f4f4" stroke="#141414" stroke-width="1.7" />
<path d="M2136.1 203.2H2144.9" fill="none" stroke="#141414" stroke-width="2.3" />
<circle cx="2179" cy="204" r="16" fill="#ffffff" opacity="0.34"/>
<g transform="translate(2166.2 190.6) scale(1)">
<circle cx="5.4" cy="4.6" r="5.2" fill="url(#g62)" />
<rect x="3.9" y="3" width="3" height="3.2" fill="#fbfbd0" />
<path d="M12.6 4.2 Q12.6 0.6 18.6 0.6 Q24.4 0.6 24.4 4.2 V16.4 Q24.4 19.6 18.6 19.6 Q12.6 19.6 12.6 16.4 Z" fill="url(#g63)" stroke="#12306c" stroke-width="1.5" />
<ellipse cx="18.5" cy="4.3" rx="5" ry="2.2" fill="#e6eefc" />
<path d="M14 14.5 Q14 18.4 18.6 18.4 L16 18.4 Z" fill="#e05070" opacity="0.5"/>
<circle cx="10.4" cy="18.4" r="6" fill="url(#g64)" stroke="#0a0a0a" stroke-width="1.5" />
</g>
<text x="2199.8" y="212.6" font-size="20.04" fill="#0a0a0a" textLength="57.93" lengthAdjust="spacingAndGlyphs" >Scene</text>
<circle cx="2185.7" cy="239" r="7.3" fill="#f4f4f4" stroke="#141414" stroke-width="1.7" />
<path d="M2181.3 239H2190.1" fill="none" stroke="#141414" stroke-width="2.3" />
<path d="M2185.7 234.6V243.4" fill="none" stroke="#141414" stroke-width="2.3" />
<g transform="translate(2201.3 225.8) scale(1)" opacity="1">
<path d="M7.600 7.400 L27 12.600 L22.600 27.600 L3.400 22.400 Z" fill="#f4f4f0" stroke="#1a1a1a" stroke-width="1.3" stroke-linejoin="round"/>
<path d="M9 10.200 L24.600 14.400 L21.400 25 L6 20.800 Z" fill="#6a6238" />
<rect x="0" y="0" width="20.4" height="20.4" fill="#ffffff" stroke="#1a1a1a" stroke-width="1.4" />
<rect x="2.2" y="2.2" width="16" height="16" fill="url(#g65)" />
<circle cx="4.2" cy="4" r="2.2" fill="#e8c010" />
<rect x="9.6" y="3.2" width="5.4" height="9.6" fill="url(#g66)" rx="2" stroke="#12306c" stroke-width="1.1" />
<circle cx="7.4" cy="13.4" r="3.1" fill="url(#g67)" stroke="#1a1a1a" stroke-width="1.1" />
</g>
<text x="2236" y="248.3" font-size="20.04" fill="#0a0a0a" textLength="130.51" lengthAdjust="spacingAndGlyphs" >RenderLayers</text>
<rect x="2385.4" y="229" width="2.8" height="20.6" fill="#8e8e8e" />
<circle cx="2414" cy="241" r="16" fill="#e4e4dc" opacity="0.6"/>
<g transform="translate(2406 226.6) scale(1)" opacity="1">
<path d="M7.600 7.400 L27 12.600 L22.600 27.600 L3.400 22.400 Z" fill="#f4f4f0" stroke="#1a1a1a" stroke-width="1.3" stroke-linejoin="round"/>
<path d="M9 10.200 L24.600 14.400 L21.400 25 L6 20.800 Z" fill="#6a6238" />
<rect x="0" y="0" width="20.4" height="20.4" fill="#ffffff" stroke="#1a1a1a" stroke-width="1.4" />
<rect x="2.2" y="2.2" width="16" height="16" fill="url(#g68)" />
<circle cx="4.2" cy="4" r="2.2" fill="#e8c010" />
<rect x="9.6" y="3.2" width="5.4" height="9.6" fill="url(#g69)" rx="2" stroke="#12306c" stroke-width="1.1" />
<circle cx="7.4" cy="13.4" r="3.1" fill="url(#g70)" stroke="#1a1a1a" stroke-width="1.1" />
</g>
<rect x="2421.3" y="220.9" width="140" height="36.5" fill="#b6b6b6" />
<rect x="2421.6" y="220.9" width="1.6" height="36.5" fill="#a2a2a2" />
<rect x="2457.2" y="220.9" width="1.6" height="36.5" fill="#a2a2a2" />
<rect x="2493" y="220.9" width="1.6" height="36.5" fill="#a2a2a2" />
<circle cx="2214.7" cy="275.8" r="16" fill="#cacae0" opacity="0.85"/>
<g opacity="1">
<circle cx="2214.7" cy="275.8" r="12" fill="url(#g71)" stroke="#0a1a3a" stroke-width="2" />
<g transform="translate(2214.7 275.8) scale(1)">
<path d="M-7 -6.600 Q-4 -9.600 -0.600 -8.600 Q-1.600 -5.600 -4.600 -5 Q-5.600 -2 -8.600 -1.600 Q-9.600 -4.600 -7 -6.600 Z" fill="#4a7a20" />
<path d="M2.600 -8.600 Q7 -7.600 9 -3.600 Q7 -2 5 -3.600 Q3 -4.600 2.600 -8.600 Z" fill="#3e6e1c" />
<path d="M0.600 -1.600 Q5 -2.600 8.600 0.400 Q8 5 4 7.600 Q2.600 4 0.600 2.400 Q-0.400 0.400 0.600 -1.600 Z" fill="#426e1a" />
<path d="M-8 2.400 Q-4.600 2 -3.600 5 Q-5 7 -6.600 6.400 Q-8 4.400 -8 2.400 Z" fill="#4a7a20" />
</g>
<circle cx="2214.7" cy="275.8" r="10.5" fill="none" stroke="#ffffff" stroke-width="1" opacity="0.35"/>
</g>
<text x="2235.8" y="284.3" font-size="20.04" fill="#0a0a0a" textLength="54.45" lengthAdjust="spacingAndGlyphs" >World</text>
<circle cx="2176.5" cy="310.7" r="7.3" fill="#f4f4f4" stroke="#141414" stroke-width="1.7" />
<path d="M2172.1 310.7H2180.9" fill="none" stroke="#141414" stroke-width="2.3" />
<path d="M2176.5 306.3V315.1" fill="none" stroke="#141414" stroke-width="2.3" />
<g transform="translate(2201.6 298)" opacity="1">
<circle cx="7.4" cy="7.6" r="6.6" fill="url(#g72)" stroke="#5a2c00" stroke-width="1.6" />
<circle cx="18" cy="6.6" r="6.6" fill="url(#g73)" stroke="#5a2c00" stroke-width="1.6" />
<circle cx="7.4" cy="7.6" r="2.4" fill="#e08818" stroke="#5a2c00" stroke-width="0.9" />
<circle cx="18" cy="6.6" r="2.4" fill="#e08818" stroke="#5a2c00" stroke-width="0.9" />
<circle cx="7.4" cy="7.6" r="0.9" fill="#5a2c00" />
<circle cx="18" cy="6.6" r="0.9" fill="#5a2c00" />
<path d="M9 15 H19.600 V18 L26.400 15.600 V26 L19.600 23.600 V26 H9 V22.600 H3.600 V18.600 H9 Z" fill="url(#g74)" stroke="#5a2c00" stroke-width="1.6" stroke-linejoin="round"/>
<rect x="12.6" y="17" width="3.6" height="6" fill="#f8b050" opacity="0.7" />
</g>
<text x="2235.8" y="320.2" font-size="20.04" fill="#0a0a0a" textLength="74.56" lengthAdjust="spacingAndGlyphs" >Camera</text>
<rect x="2329" y="300.9" width="2.8" height="20.8" fill="#8e8e8e" />
<circle cx="2362.2" cy="311.8" r="16.5" fill="#d2d2d2" opacity="0.8"/>
<g transform="translate(2349 298.4)" opacity="1">
<circle cx="7.4" cy="7.6" r="6.6" fill="url(#g75)" stroke="#7a7a7a" stroke-width="1.6" />
<circle cx="18" cy="6.6" r="6.6" fill="url(#g76)" stroke="#7a7a7a" stroke-width="1.6" />
<circle cx="7.4" cy="7.6" r="2.4" fill="#9a9a9a" stroke="#7a7a7a" stroke-width="0.9" />
<circle cx="18" cy="6.6" r="2.4" fill="#9a9a9a" stroke="#7a7a7a" stroke-width="0.9" />
<circle cx="7.4" cy="7.6" r="0.9" fill="#7a7a7a" />
<circle cx="18" cy="6.6" r="0.9" fill="#7a7a7a" />
<path d="M9 15 H19.600 V18 L26.400 15.600 V26 L19.600 23.600 V26 H9 V22.600 H3.600 V18.600 H9 Z" fill="url(#g77)" stroke="#7a7a7a" stroke-width="1.6" stroke-linejoin="round"/>
<rect x="12.6" y="17" width="3.6" height="6" fill="#c4c4c4" opacity="0.7" />
</g>
<circle cx="2176.5" cy="346.7" r="7.3" fill="#f4f4f4" stroke="#141414" stroke-width="1.7" />
<path d="M2172.1 346.7H2180.9" fill="none" stroke="#141414" stroke-width="2.3" />
<path d="M2176.5 342.3V351.1" fill="none" stroke="#141414" stroke-width="2.3" />
<circle cx="2215" cy="347.7" r="16" fill="#dcb070" opacity="0.9"/>
<path d="M2204.1 337.2 L2225.3 337.2 L2214.7 356.2 Z" fill="none" stroke="#5a2c00" stroke-width="4.8" stroke-linejoin="round"/>
<path d="M2204.1 337.2 L2225.3 337.2 L2214.7 356.2 Z" fill="none" stroke="#f8a040" stroke-width="2.4" stroke-linejoin="round"/>
<rect x="2201.5" y="334.6" width="5.2" height="5.2" fill="#ffffff" stroke="#5a2c00" stroke-width="1.2" />
<rect x="2222.7" y="334.6" width="5.2" height="5.2" fill="#ffffff" stroke="#5a2c00" stroke-width="1.2" />
<rect x="2212.1" y="353.6" width="5.2" height="5.2" fill="#ffffff" stroke="#5a2c00" stroke-width="1.2" />
<text x="2235.8" y="356.7" font-size="20.04" fill="#ffffff" textLength="53.35" lengthAdjust="spacingAndGlyphs" >Circle</text>
<rect x="2307" y="336.8" width="2.8" height="24" fill="#8e8e8e" />
<path d="M2330.2 338.7 L2351.4 338.7 L2340.8 357.7 Z" fill="none" stroke="#6e6e6e" stroke-width="4.4" stroke-linejoin="round"/>
<path d="M2330.2 338.7 L2351.4 338.7 L2340.8 357.7 Z" fill="none" stroke="#b4b4b4" stroke-width="2" stroke-linejoin="round"/>
<rect x="2327.6" y="336.1" width="5.2" height="5.2" fill="#e0e0e0" stroke="#6e6e6e" stroke-width="1.2" />
<rect x="2348.8" y="336.1" width="5.2" height="5.2" fill="#e0e0e0" stroke="#6e6e6e" stroke-width="1.2" />
<rect x="2338.2" y="355.1" width="5.2" height="5.2" fill="#e0e0e0" stroke="#6e6e6e" stroke-width="1.2" />
<path d="M2428 311.1 Q2440 298.1 2452 311.1 Q2440 324.1 2428 311.1 Z" fill="#ffffff" stroke="#0a0a0a" stroke-width="1.7" stroke-linejoin="round"/>
<circle cx="2440" cy="310.7" r="4.6" fill="url(#g78)" />
<circle cx="2440.4" cy="310.1" r="2" fill="#0a0a0a" />
<path d="M2471.2 299.9 l0 19.400 l4.600 -4.200 l4 9 l3 -1.400 l-3.800 -8.800 l6 -0.600 Z" fill="url(#g79)" stroke="#0a0a0a" stroke-width="1.5" stroke-linejoin="round"/>
<g transform="translate(2500.4 301.1) scale(0.86)">
<rect x="2.4" y="0" width="5.6" height="4" fill="#d8d8d8" rx="1.2" stroke="#0a0a0a" stroke-width="1.2" />
<rect x="0" y="2.8" width="25.2" height="19.6" fill="url(#g80)" rx="2.4" stroke="#0a0a0a" stroke-width="1.6" />
<rect x="4.4" y="6.6" width="2.4" height="2.2" fill="#e01010" />
<circle cx="15.2" cy="13.6" r="6.8" fill="#e8e8e8" stroke="#8a8a8a" stroke-width="0.8" />
<circle cx="15.2" cy="13.6" r="4.8" fill="url(#g81)" />
</g>
<path d="M2428 347.2 Q2440 334.2 2452 347.2 Q2440 360.2 2428 347.2 Z" fill="#ffffff" stroke="#0a0a0a" stroke-width="1.7" stroke-linejoin="round"/>
<circle cx="2440" cy="346.8" r="4.6" fill="url(#g82)" />
<circle cx="2440.4" cy="346.2" r="2" fill="#0a0a0a" />
<path d="M2471.2 336 l0 19.400 l4.600 -4.200 l4 9 l3 -1.400 l-3.800 -8.800 l6 -0.600 Z" fill="url(#g83)" stroke="#0a0a0a" stroke-width="1.5" stroke-linejoin="round"/>
<g transform="translate(2500.4 337.2) scale(0.86)">
<rect x="2.4" y="0" width="5.6" height="4" fill="#d8d8d8" rx="1.2" stroke="#0a0a0a" stroke-width="1.2" />
<rect x="0" y="2.8" width="25.2" height="19.6" fill="url(#g84)" rx="2.4" stroke="#0a0a0a" stroke-width="1.6" />
<rect x="4.4" y="6.6" width="2.4" height="2.2" fill="#e01010" />
<circle cx="15.2" cy="13.6" r="6.8" fill="#e8e8e8" stroke="#8a8a8a" stroke-width="0.8" />
<circle cx="15.2" cy="13.6" r="4.8" fill="url(#g85)" />
</g>
</g>
<rect x="2529.3" y="193" width="23.3" height="157.2" fill="#b6b6b6" rx="11.6" stroke="#a4a4a4" stroke-width="1.4" />
<rect x="2134" y="359" width="386.3" height="22.4" fill="#b4b4b4" rx="11.2" stroke="#a2a2a2" stroke-width="1.4" />
<rect x="2134" y="359" width="336.7" height="22.4" fill="#bdbdbd" rx="11.2" stroke="#a2a2a2" stroke-width="1.4" />
<rect x="2528.6" y="366" width="1.4" height="20" fill="#bcbcbc" />
<path d="M2147.3 145.2H2188.6A6 6 0 0 1 2194.6 151.2V174.6A6 6 0 0 1 2188.6 180.6H2147.3A6 6 0 0 1 2141.3 174.6V151.2A6 6 0 0 1 2147.3 145.2Z" fill="#444444" stroke="#5c5c5c" stroke-width="1.3" />
<rect x="2148.8" y="149.4" width="13.4" height="5.6" fill="#f8a030" stroke="#5a2c00" stroke-width="1" />
<rect x="2150.4" y="151" width="9" height="2" fill="#ffe0b0" />
<path d="M2154.2 155 V173.700 H2162 M2154.200 163.400 H2162" fill="none" stroke="#9cb8e8" stroke-width="1.3" />
<rect x="2162" y="160.8" width="12.6" height="4.6" fill="#ffffff" stroke="#2a2a2a" stroke-width="0.9" />
<rect x="2162" y="171.4" width="12.6" height="4.6" fill="#ffffff" stroke="#2a2a2a" stroke-width="0.9" />
<path d="M2178.5 160.9 L2188.5 160.9 L2183.5 151.3 Z" fill="#b4b4b4" />
<path d="M2178.5 165.3 L2188.5 165.3 L2183.5 174.9 Z" fill="#b4b4b4" />
<text x="2217.7" y="171.6" font-size="20.04" fill="#000" textLength="45.09" lengthAdjust="spacingAndGlyphs" >View</text>
<text x="2300" y="171.6" font-size="20.04" fill="#000" textLength="65.28" lengthAdjust="spacingAndGlyphs" >Search</text>
<path d="M2396.4 145.4H2572.4A7 7 0 0 1 2579.4 152.4V173.6A7 7 0 0 1 2572.4 180.6H2396.4A7 7 0 0 1 2389.4 173.6V152.4A7 7 0 0 1 2396.4 145.4Z" fill="#444444" stroke="#5c5c5c" stroke-width="1.3" />
<text x="2403.3" y="172" font-size="20.04" fill="#eeeeee" textLength="97.42" lengthAdjust="spacingAndGlyphs" >All Scenes</text>
<g clip-path="url(#c86)">
<line x1="2536.5" y1="139" x2="2562" y2="164.5" stroke="#303030" stroke-width="1.7" />
<line x1="2534.3" y1="139" x2="2562" y2="166.7" stroke="#dadada" stroke-width="1.4" stroke-dasharray="1.5 1.2"/>
<line x1="2543.4" y1="139" x2="2562" y2="157.6" stroke="#303030" stroke-width="1.7" />
<line x1="2541.2" y1="139" x2="2562" y2="159.8" stroke="#dadada" stroke-width="1.4" stroke-dasharray="1.5 1.2"/>
<line x1="2550.6" y1="139" x2="2562" y2="150.4" stroke="#303030" stroke-width="1.7" />
<line x1="2548.4" y1="139" x2="2562" y2="152.6" stroke="#dadada" stroke-width="1.4" stroke-dasharray="1.5 1.2"/>
</g>
<g clip-path="url(#c87)">
<line x1="2124.8" y1="364.2" x2="2160" y2="399.4" stroke="#3a3a3a" stroke-width="1.7" />
<line x1="2124.8" y1="366.8" x2="2160" y2="402" stroke="#d6d6d6" stroke-width="1.5" />
<line x1="2124.8" y1="371.4" x2="2160" y2="406.6" stroke="#3a3a3a" stroke-width="1.7" />
<line x1="2124.8" y1="374" x2="2160" y2="409.2" stroke="#d6d6d6" stroke-width="1.5" />
<line x1="2124.8" y1="378.6" x2="2160" y2="413.8" stroke="#3a3a3a" stroke-width="1.7" />
<line x1="2124.8" y1="381.2" x2="2160" y2="416.4" stroke="#d6d6d6" stroke-width="1.5" />
</g>
<rect x="2126.8" y="386.7" width="434" height="1.8" fill="#555" />
<rect x="2122.5" y="388.4" width="438" height="3" fill="#000" />
<rect x="2126.8" y="391.2" width="434" height="1.8" fill="#5c5c5c" />
<rect x="2126.8" y="393" width="434" height="43.6" fill="#ababab" />
<rect x="2126.8" y="436.6" width="434" height="1.6" fill="#b4b4b4" />
<path d="M2147.3 397.4H2188.6A6 6 0 0 1 2194.6 403.4V426.6A6 6 0 0 1 2188.6 432.6H2147.3A6 6 0 0 1 2141.3 426.6V403.4A6 6 0 0 1 2147.3 397.4Z" fill="#444444" stroke="#5c5c5c" stroke-width="1.3" />
<rect x="2149.6" y="403.6" width="24.2" height="8.6" fill="url(#g88)" rx="4.3" stroke="#0a0a0a" stroke-width="1.5" />
<rect x="2149.6" y="416.4" width="24.2" height="10" fill="#f4f4f4" rx="4" stroke="#0a0a0a" stroke-width="1.5" />
<path d="M2152.4 421.400 l2.600 -2.400 v4.800 Z M2171 421.400 l-2.600 -2.400 v4.800 Z" fill="#1a1a1a" />
<rect x="2155" y="419.6" width="1.2" height="3.6" fill="#1a1a1a" />
<rect x="2167.2" y="419.6" width="1.2" height="3.6" fill="#1a1a1a" />
<path d="M2178.5 412.8 L2188.5 412.8 L2183.5 403.2 Z" fill="#b4b4b4" />
<path d="M2178.5 417.2 L2188.5 417.2 L2183.5 426.8 Z" fill="#b4b4b4" />
<g clip-path="url(#c89)">
<path d="M2216.3 397.4H2602.3A7 7 0 0 1 2609.3 404.4V425.6A7 7 0 0 1 2602.3 432.6H2216.3A7 7 0 0 1 2209.3 425.6V404.4A7 7 0 0 1 2216.3 397.4Z" fill="#444444" stroke="#5c5c5c" stroke-width="1.3" />
<rect x="2497" y="398.9" width="34" height="32" fill="#5680c2" />
<rect x="2243.1" y="398" width="1.8" height="34" fill="#5e5e5e" />
<rect x="2279.1" y="398" width="1.8" height="34" fill="#5e5e5e" />
<rect x="2315.1" y="398" width="1.8" height="34" fill="#5e5e5e" />
<rect x="2351.1" y="398" width="1.8" height="34" fill="#5e5e5e" />
<rect x="2387.1" y="398" width="1.8" height="34" fill="#5e5e5e" />
<rect x="2423.1" y="398" width="1.8" height="34" fill="#5e5e5e" />
<rect x="2459.1" y="398" width="1.8" height="34" fill="#5e5e5e" />
<rect x="2495.1" y="398" width="1.8" height="34" fill="#5e5e5e" />
<rect x="2531.1" y="398" width="1.8" height="34" fill="#5e5e5e" />
<g transform="translate(2214.4 403) scale(1.04)">
<rect x="2.4" y="0" width="5.6" height="4" fill="#d8d8d8" rx="1.2" stroke="#0a0a0a" stroke-width="1.2" />
<rect x="0" y="2.8" width="25.2" height="19.6" fill="url(#g90)" rx="2.4" stroke="#0a0a0a" stroke-width="1.6" />
<rect x="4.4" y="6.6" width="2.4" height="2.2" fill="#e01010" />
<circle cx="15.2" cy="13.6" r="6.8" fill="#e8e8e8" stroke="#8a8a8a" stroke-width="0.8" />
<circle cx="15.2" cy="13.6" r="4.8" fill="url(#g91)" />
</g>
<rect x="2212" y="400" width="30" height="30" fill="#444444" opacity="0.22" />
<g transform="translate(2248.6 402) scale(0.96)" opacity="0.78">
<path d="M7.600 7.400 L27 12.600 L22.600 27.600 L3.400 22.400 Z" fill="#f4f4f0" stroke="#1a1a1a" stroke-width="1.3" stroke-linejoin="round"/>
<path d="M9 10.200 L24.600 14.400 L21.400 25 L6 20.800 Z" fill="#6a6238" />
<rect x="0" y="0" width="20.4" height="20.4" fill="#ffffff" stroke="#1a1a1a" stroke-width="1.4" />
<rect x="2.2" y="2.2" width="16" height="16" fill="url(#g92)" />
<circle cx="4.2" cy="4" r="2.2" fill="#e8c010" />
<rect x="9.6" y="3.2" width="5.4" height="9.6" fill="url(#g93)" rx="2" stroke="#12306c" stroke-width="1.1" />
<circle cx="7.4" cy="13.4" r="3.1" fill="url(#g94)" stroke="#1a1a1a" stroke-width="1.1" />
</g>
<g opacity="0.78">
<g transform="translate(2285 402.6) scale(1.04)">
<circle cx="5.4" cy="4.6" r="5.2" fill="url(#g95)" />
<rect x="3.9" y="3" width="3" height="3.2" fill="#fbfbd0" />
<path d="M12.6 4.2 Q12.6 0.6 18.6 0.6 Q24.4 0.6 24.4 4.2 V16.4 Q24.4 19.6 18.6 19.6 Q12.6 19.6 12.6 16.4 Z" fill="url(#g96)" stroke="#12306c" stroke-width="1.5" />
<ellipse cx="18.5" cy="4.3" rx="5" ry="2.2" fill="#e6eefc" />
<path d="M14 14.5 Q14 18.4 18.6 18.4 L16 18.4 Z" fill="#e05070" opacity="0.5"/>
<circle cx="10.4" cy="18.4" r="6" fill="url(#g97)" stroke="#0a0a0a" stroke-width="1.5" />
</g>
</g>
<g opacity="0.78">
<circle cx="2334" cy="415.4" r="11.6" fill="url(#g98)" stroke="#0a1a3a" stroke-width="2" />
<g transform="translate(2334 415.4) scale(0.97)">
<path d="M-7 -6.600 Q-4 -9.600 -0.600 -8.600 Q-1.600 -5.600 -4.600 -5 Q-5.600 -2 -8.600 -1.600 Q-9.600 -4.600 -7 -6.600 Z" fill="#4a7a20" />
<path d="M2.600 -8.600 Q7 -7.600 9 -3.600 Q7 -2 5 -3.600 Q3 -4.600 2.600 -8.600 Z" fill="#3e6e1c" />
<path d="M0.600 -1.600 Q5 -2.600 8.600 0.400 Q8 5 4 7.600 Q2.600 4 0.600 2.400 Q-0.400 0.400 0.600 -1.600 Z" fill="#426e1a" />
<path d="M-8 2.400 Q-4.600 2 -3.600 5 Q-5 7 -6.600 6.400 Q-8 4.400 -8 2.400 Z" fill="#4a7a20" />
</g>
<circle cx="2334" cy="415.4" r="10.1" fill="none" stroke="#ffffff" stroke-width="1" opacity="0.35"/>
</g>
<g transform="translate(2370 415.600) scale(0.960)" opacity="0.85">
<path d="M0 -12.600 L11.600 -7.400 V6.400 L0 12.600 L-11.600 6.400 V-7.400 Z" fill="#e8c8a0" stroke="#4a2c10" stroke-width="1.9" stroke-linejoin="round"/>
<path d="M0 -1.600 L10.200 -6.400 V5.600 L0 11 Z" fill="#8a5c28" />
<path d="M0 -1.600 L-10.200 -6.400 V5.600 L0 11 Z" fill="#c8883c" />
<path d="M0 -1.600 L10.200 -6.400 L0 -11.200 L-10.200 -6.400 Z" fill="#d8a870" />
</g>
<rect x="2392.1" y="416" width="17" height="10" rx="5" fill="none" stroke="#3a3a3a" stroke-width="5.200" transform="rotate(-38 2400.6 421)"/>
<rect x="2402.9" y="406" width="17" height="10" rx="5" fill="none" stroke="#3a3a3a" stroke-width="5.200" transform="rotate(-38 2411.4 411)"/>
<rect x="2392.1" y="416" width="17" height="10" rx="5" fill="none" stroke="#a2a2a2" stroke-width="2.800" transform="rotate(-38 2400.6 421)"/>
<rect x="2402.9" y="406" width="17" height="10" rx="5" fill="none" stroke="#a2a2a2" stroke-width="2.800" transform="rotate(-38 2411.4 411)"/>
<path d="M2432.600 424.600 L2446.600 410.600 Q2444.600 404.600 2449.600 402.600 L2451 406.600 L2455 406.600 L2455.600 403 Q2458.600 407.600 2455.600 411.600 Q2452.600 414.600 2449 413.400 L2435.400 427.400 Q2433.400 428.400 2432.200 427 Q2431.600 425.600 2432.600 424.600 Z" fill="#5c82bc" stroke="#2a3448" stroke-width="1.6" stroke-linejoin="round"/>
<circle cx="2434" cy="426" r="0.9" fill="#1a2438" />
<path d="M2467.4 406 L2488.6 406 L2478 425 Z" fill="none" stroke="#2e2e2e" stroke-width="4.6" stroke-linejoin="round"/>
<path d="M2467.4 406 L2488.6 406 L2478 425 Z" fill="none" stroke="#8a8a8a" stroke-width="2.2" stroke-linejoin="round"/>
<rect x="2464.8" y="403.4" width="5.2" height="5.2" fill="#e4e4e4" stroke="#2e2e2e" stroke-width="1.2" />
<rect x="2486" y="403.4" width="5.2" height="5.2" fill="#e4e4e4" stroke="#2e2e2e" stroke-width="1.2" />
<rect x="2475.4" y="422.4" width="5.2" height="5.2" fill="#e4e4e4" stroke="#2e2e2e" stroke-width="1.2" />
<circle cx="2514" cy="415" r="11.4" fill="#f4f4f4" stroke="#0a0a0a" stroke-width="1.7" />
<path d="M2514 404.4 A10.6 10.6 0 0 1 2524.6 415 L2514 415 Z" fill="#b86858" />
<path d="M2514 425.6 A10.6 10.6 0 0 1 2503.4 415 L2514 415 Z" fill="#a86050" />
<circle cx="2514" cy="415" r="10.6" fill="url(#g99)" />
<circle cx="2518.6" cy="420" r="2.6" fill="#ffb040" opacity="0.7"/>
<rect x="2538.4" y="403.6" width="24" height="24" fill="#e4e4e4" stroke="#3a3a3a" stroke-width="1.4" />
<rect x="2539.6" y="404.8" width="4.6" height="4.6" fill="#a83828" />
<rect x="2539.6" y="414" width="4.6" height="4.6" fill="#a83828" />
<rect x="2539.6" y="423.2" width="4.6" height="4.6" fill="#a83828" />
<rect x="2544.2" y="409.4" width="4.6" height="4.6" fill="#a83828" />
<rect x="2544.2" y="418.6" width="4.6" height="4.6" fill="#a83828" />
<rect x="2548.8" y="404.8" width="4.6" height="4.6" fill="#a83828" />
<rect x="2548.8" y="414" width="4.6" height="4.6" fill="#a83828" />
<rect x="2548.8" y="423.2" width="4.6" height="4.6" fill="#a83828" />
<rect x="2553.4" y="409.4" width="4.6" height="4.6" fill="#a83828" />
<rect x="2553.4" y="418.6" width="4.6" height="4.6" fill="#a83828" />
<rect x="2558" y="404.8" width="4.6" height="4.6" fill="#a83828" />
<rect x="2558" y="414" width="4.6" height="4.6" fill="#a83828" />
<rect x="2558" y="423.2" width="4.6" height="4.6" fill="#a83828" />
</g>
<g clip-path="url(#c100)">
<line x1="2535.5" y1="390" x2="2562" y2="416.5" stroke="#262626" stroke-width="1.7" />
<line x1="2533.3" y1="390" x2="2562" y2="418.7" stroke="#dadada" stroke-width="1.4" stroke-dasharray="1.5 1.2"/>
<line x1="2542.4" y1="390" x2="2562" y2="409.6" stroke="#262626" stroke-width="1.7" />
<line x1="2540.2" y1="390" x2="2562" y2="411.8" stroke="#dadada" stroke-width="1.4" stroke-dasharray="1.5 1.2"/>
<line x1="2549.6" y1="390" x2="2562" y2="402.4" stroke="#262626" stroke-width="1.7" />
<line x1="2547.4" y1="390" x2="2562" y2="404.6" stroke="#dadada" stroke-width="1.4" stroke-dasharray="1.5 1.2"/>
</g>
<g transform="translate(2158.6 469) rotate(45)">
<path d="M-4.600 -13 H4.600 V-10 H3 V-3 Q7 -2 7 1.600 H1 L0 14 L-1 1.600 H-7 Q-7 -2 -3 -3 V-10 H-4.600 Z" fill="url(#g101)" stroke="#1a1a1a" stroke-width="1.5" stroke-linejoin="round"/>
</g>
<g transform="translate(2188.6 456.4) scale(1)">
<circle cx="5.4" cy="4.6" r="5.2" fill="url(#g102)" />
<rect x="3.9" y="3" width="3" height="3.2" fill="#fbfbd0" />
<path d="M12.6 4.2 Q12.6 0.6 18.6 0.6 Q24.4 0.6 24.4 4.2 V16.4 Q24.4 19.6 18.6 19.6 Q12.6 19.6 12.6 16.4 Z" fill="url(#g103)" stroke="#12306c" stroke-width="1.5" />
<ellipse cx="18.5" cy="4.3" rx="5" ry="2.2" fill="#e6eefc" />
<path d="M14 14.5 Q14 18.4 18.6 18.4 L16 18.4 Z" fill="#e05070" opacity="0.5"/>
<circle cx="10.4" cy="18.4" r="6" fill="url(#g104)" stroke="#0a0a0a" stroke-width="1.5" />
</g>
<path d="M2225.4 464.600 L2232 469.800 L2225.400 475 Z" fill="#2e2e2e" />
<g transform="translate(2270.4 469.800) scale(0.960)">
<path d="M0 -12.600 L11.600 -7.400 V6.400 L0 12.600 L-11.600 6.400 V-7.400 Z" fill="#fbe2c0" stroke="#3a1c00" stroke-width="1.9" stroke-linejoin="round"/>
<path d="M0 -1.600 L10.200 -6.400 V5.600 L0 11 Z" fill="url(#g105)" />
<path d="M0 -1.600 L-10.200 -6.400 V5.600 L0 11 Z" fill="url(#g106)" />
<path d="M0 -1.600 L10.200 -6.400 L0 -11.200 L-10.200 -6.400 Z" fill="#fcd8a8" />
</g>
<text x="2291" y="478.8" font-size="20.04" fill="#0a0a0a" textLength="53.35" lengthAdjust="spacingAndGlyphs" >Circle</text>
<path d="M2378.4 464.600 L2385 469.800 L2378.400 475 Z" fill="#2e2e2e" />
<rect x="2142" y="516.8" width="352.6" height="74.6" fill="#c4c4c4" rx="6.5" stroke="#a8a8a8" stroke-width="1.3" />
<rect x="2143" y="590.6" width="349.8" height="1.6" fill="#8e8e8e" opacity="0.5" />
<circle cx="2166" cy="573" r="7.3" fill="none" stroke="#8a8a8a" stroke-width="1.3" />
<path d="M2161.600 573 H2170.400 M2166 568.600 V577.400" fill="none" stroke="#8a8a8a" stroke-width="1.7" />
<path d="M2322 570.800 H2348 M2322 575.600 H2348" fill="none" stroke="#2a2a2a" stroke-width="1.3" />
<path d="M2517.6 515.8H2538A7 7 0 0 1 2545 522.8V543.4A7 7 0 0 1 2538 550.4H2517.6A7 7 0 0 1 2510.6 543.4V522.8A7 7 0 0 1 2517.6 515.8Z" fill="#dddddd" stroke="#b0b0b0" stroke-width="1.3" />
<path d="M2517.6 515.8H2538A7 7 0 0 1 2545 522.8V550.4H2510.6V522.8A7 7 0 0 1 2517.6 515.8Z" fill="#dddddd" stroke="#b0b0b0" stroke-width="1.3" />
<rect x="2510.6" y="550.4" width="34.4" height="35" fill="#dddddd" stroke="#b0b0b0" stroke-width="1.3" />
<path d="M2510.6 585.4H2545V615.4A7 7 0 0 1 2538 622.4H2517.6A7 7 0 0 1 2510.6 615.4V585.4Z" fill="#444444" stroke="#6a6a6a" stroke-width="1.3" />
<path d="M-2.3 -10H2.3V-2.3H10V2.3H2.3V10H-2.3V2.3H-10V-2.3H-2.3Z" fill="#f4f4f4" stroke="#141414" stroke-width="1.5" stroke-linejoin="round" transform="translate(2527.8 533) rotate(0)"/>
<rect x="2517.8" y="565.2" width="20" height="5.4" fill="url(#g107)" rx="1" stroke="#141414" stroke-width="1.4" />
<path d="M2519 597.600 H2537.200 L2528 612 Z" fill="url(#g108)" />
<path d="M2536.600 598.400 L2530.400 611" fill="none" stroke="#d8d8d8" stroke-width="1.6" />
<path d="M2147.8 632.6H2195.4V667.4H2147.8A7 7 0 0 1 2140.8 660.4V639.6A7 7 0 0 1 2147.8 632.6Z" fill="#444444" stroke="#5c5c5c" stroke-width="1.3" />
<circle cx="2161.6" cy="650" r="10.6" fill="#f4f4f4" stroke="#0a0a0a" stroke-width="1.7" />
<path d="M2161.6 640.2 A9.8 9.8 0 0 1 2171.4 650 L2161.6 650 Z" fill="#b86858" />
<path d="M2161.6 659.8 A9.8 9.8 0 0 1 2151.8 650 L2161.6 650 Z" fill="#a86050" />
<circle cx="2161.6" cy="650" r="9.8" fill="url(#g109)" />
<circle cx="2166.2" cy="655" r="2.6" fill="#ffb040" opacity="0.7"/>
<path d="M2180.8 647.8 L2190 647.8 L2185.4 638.8 Z" fill="#b4b4b4" />
<path d="M2180.8 652.2 L2190 652.2 L2185.4 661.2 Z" fill="#b4b4b4" />
<path d="M2195.4 632.6H2386A7 7 0 0 1 2393 639.6V660.4A7 7 0 0 1 2386 667.4H2195.4V632.6Z" fill="#dddddd" stroke="#b0b0b0" stroke-width="1.3" />
<path d="M-2.3 -10H2.3V-2.3H10V2.3H2.3V10H-2.3V2.3H-10V-2.3H-2.3Z" fill="#f4f4f4" stroke="#141414" stroke-width="1.5" stroke-linejoin="round" transform="translate(2216.6 650) rotate(0)"/>
<text x="2286.88" y="658.8" font-size="20.04" fill="#000" textLength="41.44" lengthAdjust="spacingAndGlyphs" >New</text>
<rect x="2558.6" y="139" width="1.4" height="1453" fill="#8e8e8e" />
<g clip-path="url(#c110)">
<line x1="2124.8" y1="1568.4" x2="2160" y2="1603.6" stroke="#2e2e2e" stroke-width="1.7" />
<line x1="2124.8" y1="1571" x2="2160" y2="1606.2" stroke="#d6d6d6" stroke-width="1.5" />
<line x1="2124.8" y1="1575.6" x2="2160" y2="1610.8" stroke="#2e2e2e" stroke-width="1.7" />
<line x1="2124.8" y1="1578.2" x2="2160" y2="1613.4" stroke="#d6d6d6" stroke-width="1.5" />
<line x1="2124.8" y1="1582.8" x2="2160" y2="1618" stroke="#2e2e2e" stroke-width="1.7" />
<line x1="2124.8" y1="1585.4" x2="2160" y2="1620.6" stroke="#d6d6d6" stroke-width="1.5" />
</g>
<g clip-path="url(#c111)">
<line x1="2101.1" y1="139" x2="2123" y2="160.9" stroke="#161616" stroke-width="2" />
<line x1="2098.9" y1="139" x2="2123" y2="163.1" stroke="#e2e2e2" stroke-width="1.3" stroke-dasharray="1.6 1"/>
<line x1="2108.4" y1="139" x2="2123" y2="153.6" stroke="#161616" stroke-width="2" />
<line x1="2106.2" y1="139" x2="2123" y2="155.8" stroke="#e2e2e2" stroke-width="1.3" stroke-dasharray="1.6 1"/>
<line x1="2115.6" y1="139" x2="2123" y2="146.4" stroke="#161616" stroke-width="2" />
<line x1="2113.4" y1="139" x2="2123" y2="148.6" stroke="#e2e2e2" stroke-width="1.3" stroke-dasharray="1.6 1"/>
</g>
<path d="M2101.2 178H2121V203H2101.2A5 5 0 0 1 2096.2 198V183A5 5 0 0 1 2101.2 178Z" fill="#282828" />
<path d="M2103 190.600 H2115 M2109 185 V196.200" fill="none" stroke="#747474" stroke-width="4" />
<rect x="0" y="1592" width="2560" height="8" fill="url(#g112)" />
<rect x="0" y="1591.6" width="2560" height="1.2" fill="#050505" opacity="0.55" />
<path d="M0 1584 V1592.4 H9 Q0 1592.4 0 1584 Z" fill="#0a0808" />
<path d="M2560 1584 V1592.4 H2551 Q2560 1592.4 2560 1584 Z" fill="#8a8480" />
</svg>
</body></html>
